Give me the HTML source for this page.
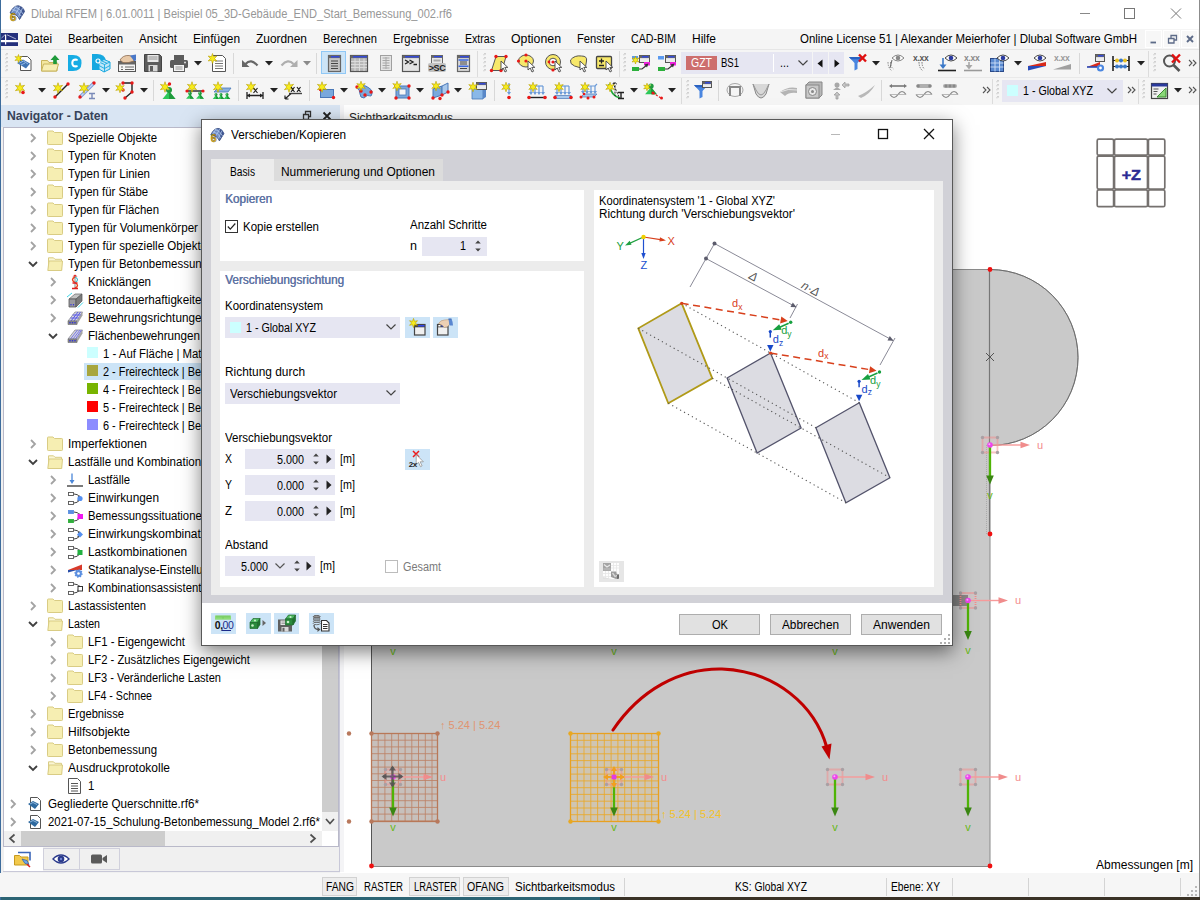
<!DOCTYPE html>
<html lang="de"><head><meta charset="utf-8"><title>Dlubal RFEM</title>
<style>
html,body{margin:0;padding:0}
body{width:1200px;height:900px;position:relative;overflow:hidden;background:#fff;font:12px "Liberation Sans",sans-serif;color:#000}
.b{position:absolute;display:block}
.t{position:absolute;white-space:nowrap;display:block;transform-origin:0 50%}
svg{overflow:visible}
</style></head>
<body>
<div class="b" style="left:0px;top:0px;width:1200px;height:29px;background:#fff;"></div>
<svg class="b" style="left:8px;top:3px;" width="20" height="20" viewBox="0 0 20 20">
<path d="M2 10 Q5 3 10 2.700 Q15 3.500 16.500 8.500 L11.500 16.500 Q9.500 11 2 10 Z" fill="#6f8cc4" stroke="#3a4c7c" stroke-width=".8"/>
<path d="M10 2.700 Q15 3.500 16.500 8.500 L11.500 16.500 Q13.500 9 10 2.700 Z" fill="#3f5590"/>
<path d="M4.500 6.500 Q10 7 13.500 13.500 M7 4 Q12 5 15 11 M4 9.500 L8 3.200 M7.500 11 L12 3.500 M10.500 13.500 L14.500 5" stroke="#b4ccf0" stroke-width=".8" fill="none"/>
<text x="5.300" y="17.800" font-size="11.500" font-weight="bold" text-anchor="middle" fill="#f2c420" stroke="#5e4e14" stroke-width=".5" font-family="Liberation Sans, sans-serif">6</text>
</svg>
<span class="t" style="left:31px;top:6px;line-height:16px;color:#979797;transform:scaleX(0.9240);">Dlubal RFEM | 6.01.0011 | Beispiel 05_3D-Gebäude_END_Start_Bemessung_002.rf6</span>
<svg class="b" style="left:1070px;top:0px;" width="130" height="28" viewBox="0 0 130 28">
<path d="M10 13.500 H20" stroke="#888" stroke-width="1"/>
<rect x="54.500" y="8.500" width="10" height="10" fill="none" stroke="#777" stroke-width="1"/>
<path d="M101 8.500 L111 18.500 M111 8.500 L101 18.500" stroke="#777" stroke-width="1"/>
</svg>
<div class="b" style="left:0px;top:29px;width:1200px;height:21px;background:#f5f5f5;border-bottom:1px solid #e6e6e6;box-sizing:border-box;"></div>
<svg class="b" style="left:1px;top:33px;" width="17" height="13" viewBox="0 0 17 13">
<rect width="17" height="13" fill="#24307c"/>
<rect x="0" y="7" width="17" height="2.200" fill="#fff"/>
<rect x="4" y="1.500" width="1.200" height="10" fill="#fff"/>
<path d="M0.500 5 L4 1.800 M6 1.800 L15 6" stroke="#dfe3f3" stroke-width=".7"/>
</svg>
<span class="t" style="left:25px;top:31px;line-height:16px;transform:scaleX(0.9637);">Datei</span>
<span class="t" style="left:68px;top:31px;line-height:16px;transform:scaleX(0.9475);">Bearbeiten</span>
<span class="t" style="left:139px;top:31px;line-height:16px;transform:scaleX(0.9655);">Ansicht</span>
<span class="t" style="left:193px;top:31px;line-height:16px;transform:scaleX(0.9921);">Einfügen</span>
<span class="t" style="left:256px;top:31px;line-height:16px;transform:scaleX(0.9927);">Zuordnen</span>
<span class="t" style="left:323px;top:31px;line-height:16px;transform:scaleX(0.9303);">Berechnen</span>
<span class="t" style="left:393px;top:31px;line-height:16px;transform:scaleX(0.9326);">Ergebnisse</span>
<span class="t" style="left:465px;top:31px;line-height:16px;transform:scaleX(0.8819);">Extras</span>
<span class="t" style="left:511px;top:31px;line-height:16px;transform:scaleX(1.0266);">Optionen</span>
<span class="t" style="left:577px;top:31px;line-height:16px;transform:scaleX(0.9339);">Fenster</span>
<span class="t" style="left:631px;top:31px;line-height:16px;transform:scaleX(0.8881);">CAD-BIM</span>
<span class="t" style="left:692px;top:31px;line-height:16px;transform:scaleX(0.9993);">Hilfe</span>
<span class="t" style="left:800px;top:31px;line-height:16px;transform:scaleX(0.9562);">Online License 51 | Alexander Meierhofer | Dlubal Software GmbH</span>
<div class="b" style="left:1145px;top:30px;width:17px;height:18px;background:#f7f7f7;border:1px solid #fff;box-sizing:border-box;"></div>
<div class="b" style="left:1163px;top:30px;width:17px;height:18px;background:#f7f7f7;border:1px solid #fff;box-sizing:border-box;"></div>
<div class="b" style="left:1181px;top:30px;width:17px;height:18px;background:#f7f7f7;border:1px solid #fff;box-sizing:border-box;"></div>
<svg class="b" style="left:1144px;top:30px;" width="56" height="18" viewBox="0 0 56 18">
<path d="M6.500 12.500 H12" stroke="#5d6b88" stroke-width="1.800"/>
<path d="M24.500 8.500 h5.500 v4.500 h-5.500 z M27 8 v-2.500 h5.500 v4.500 h-2.300" fill="none" stroke="#5d6b88" stroke-width="1.300"/>
<path d="M43 6 L49 12 M49 6 L43 12" stroke="#5d6b88" stroke-width="1.900"/>
</svg>
<div class="b" style="left:0px;top:50px;width:1200px;height:55px;background:#f5f5f5;"></div>
<div class="b" style="left:0px;top:77px;width:1200px;height:1px;background:#e9e9e9;"></div>
<div class="b" style="left:0px;top:0px;width:1px;height:900px;background:#3d6c9c;"></div>
<svg class="b" style="left:5px;top:53px;" width="4" height="21" viewBox="0 0 4 21"><rect x="1.200" y="0" width="1.600" height="1.600" fill="#c9c9c9"/><rect x=".2" y="1" width="1.400" height="1.400" fill="#d9d9d9"/><rect x="1.200" y="4" width="1.600" height="1.600" fill="#c9c9c9"/><rect x=".2" y="5" width="1.400" height="1.400" fill="#d9d9d9"/><rect x="1.200" y="8" width="1.600" height="1.600" fill="#c9c9c9"/><rect x=".2" y="9" width="1.400" height="1.400" fill="#d9d9d9"/><rect x="1.200" y="12" width="1.600" height="1.600" fill="#c9c9c9"/><rect x=".2" y="13" width="1.400" height="1.400" fill="#d9d9d9"/><rect x="1.200" y="16" width="1.600" height="1.600" fill="#c9c9c9"/><rect x=".2" y="17" width="1.400" height="1.400" fill="#d9d9d9"/></svg>
<svg class="b" style="left:14px;top:53px;" width="20" height="20" viewBox="0 0 20 20"><path d="M6.500 3.500 h7 l3.500 3.500 v10.500 h-10.500 z" fill="#fff" stroke="#555" stroke-width="1"/><path d="M3 10 l6 -3.500 l7 4 l-4 5 z" fill="#3f74b4"/><path d="M5.500 10 l4 -2 l4.500 3 M7 12 l4 -2" stroke="#a8c8ec" fill="none" stroke-width=".8"/><polygon points="4.5,1.5 5.3,4.0 8.0,3.5 6.2,5.5 8.0,7.5 5.3,7.0 4.5,9.5 3.7,7.0 1.0,7.5 2.8,5.5 1.0,3.5 3.7,4.0" fill="#f7ec1c" stroke="#b8a000" stroke-width=".6"/></svg>
<svg class="b" style="left:40px;top:53px;" width="20" height="20" viewBox="0 0 20 20"><path d="M1.500 7.500 h6 l1.500 2 h8 v8.500 h-15.500 z" fill="#f3e7a0" stroke="#c8b45c" stroke-width="1"/><path d="M1.500 18 l2 -7 h15 l-2 7 z" fill="#f7eeb4" stroke="#c8b45c" stroke-width="1"/><path d="M15 2 l4.500 5 h-2.700 v4 h-3.600 v-4 h-2.700 z" fill="#1e9a3a"/></svg>
<svg class="b" style="left:67px;top:53px;" width="20" height="20" viewBox="0 0 20 20"><path d="M1 2 h5 q8.500 0 8.500 8 q0 8 -8.500 8 h-5 z" fill="#16ace4"/><path d="M9.800 6.800 q-4.500 -.8 -4.500 3.200 q0 4 4.500 3.200" fill="none" stroke="#fff" stroke-width="2.100" stroke-linecap="round"/></svg>
<svg class="b" style="left:91px;top:53px;" width="20" height="20" viewBox="0 0 20 20"><path d="M1 1 h5 q8 0 9 7 l-7 9 h-7 z" fill="#16a8e0"/><path d="M8 9 l5 -2.500 l6 2.500 v7 l-6 3 l-5 -3 z" fill="#bfe6f7" stroke="#16a8e0" stroke-width="1"/><path d="M8 9 l5.500 2.500 l5.500 -2.500 M13.500 11.500 v7.500 M10.500 7.800 l5.500 2.500 M8 12.500 l5.500 3 l5.500 -3" fill="none" stroke="#16a8e0" stroke-width=".9"/><circle cx="7" cy="8" r="2" fill="none" stroke="#fff" stroke-width="1.200"/></svg>
<svg class="b" style="left:117px;top:53px;" width="20" height="20" viewBox="0 0 20 20"><rect x="1.500" y="8.500" width="17" height="10" fill="#f4f4f4" stroke="#555" stroke-width="1"/><rect x="1.500" y="8.500" width="17" height="3" fill="#666"/><path d="M4 14 h2 M8 14 h9 M4 16.500 h2 M8 16.500 h9" stroke="#666" stroke-width="1"/><path d="M3 7 q3 -5 9 -4.500 l5 1.500 v4 q-6 2.500 -11 1.500 z" fill="#e8c9a8" stroke="#8a6a50" stroke-width=".8"/><path d="M13 2.500 l6 -1 v6 l-2 .5 z" fill="#4a78c8"/></svg>
<svg class="b" style="left:143px;top:53px;" width="20" height="20" viewBox="0 0 20 20"><path d="M1.500 1.500 h15 l2 2 v15 h-17 z" fill="#5c5c5c" stroke="#444" stroke-width="1"/><rect x="4.500" y="2" width="11" height="7" fill="#e8e8e8"/><path d="M5.500 4 h9 M5.500 6 h9" stroke="#888" stroke-width=".9"/><rect x="5.500" y="12" width="9" height="6.500" fill="#d8d8d8"/><rect x="7" y="13" width="3" height="5" fill="#5c5c5c"/></svg>
<svg class="b" style="left:169px;top:53px;" width="20" height="20" viewBox="0 0 20 20"><rect x="5" y="2" width="10" height="5" fill="#5c5c5c"/><rect x="1" y="7" width="18" height="8" rx="1.500" fill="#5c5c5c"/><rect x="4.500" y="11.500" width="11" height="7" fill="#f4f4f4" stroke="#5c5c5c" stroke-width="1"/><path d="M6.500 14 h7 M6.500 16 h7" stroke="#888" stroke-width=".9"/><circle cx="16" cy="9.500" r="1" fill="#ddd"/></svg>
<svg class="b" style="left:194px;top:61px;" width="8" height="5" viewBox="0 0 8 5"><path d="M0 0 H8 L4 4.500 Z" fill="#222"/></svg>
<svg class="b" style="left:207px;top:53px;" width="20" height="20" viewBox="0 0 20 20"><path d="M5.500 2.500 h10 l3 3 v13 h-13 z" fill="#fff" stroke="#555" stroke-width="1"/><path d="M8 8 h8 M8 10.500 h8 M8 13 h8 M8 15.500 h8" stroke="#777" stroke-width="1"/><polygon points="5.5,0.5 6.5,3.7 9.8,3.0 7.6,5.5 9.8,8.0 6.6,7.3 5.5,10.5 4.5,7.3 1.2,8.0 3.4,5.5 1.2,3.0 4.4,3.7" fill="#f7ec1c" stroke="#b8a000" stroke-width=".6"/></svg>
<div class="b" style="left:233px;top:53px;width:1px;height:21px;background:#d8d8d8;"></div>
<svg class="b" style="left:241px;top:53px;" width="20" height="20" viewBox="0 0 20 20"><path d="M4.500 11 q5.500 -6 12 1.500" fill="none" stroke="#666" stroke-width="2.200"/><path d="M1 7 v7 h7.500 z" fill="#666"/></svg>
<svg class="b" style="left:265px;top:61px;" width="8" height="5" viewBox="0 0 8 5"><path d="M0 0 H8 L4 4.500 Z" fill="#222"/></svg>
<svg class="b" style="left:279px;top:53px;" width="20" height="20" viewBox="0 0 20 20"><path d="M2.500 12.500 q6.500 -7.500 12 -1.500" fill="none" stroke="#aeaeae" stroke-width="2.200"/><path d="M18.500 7 v7 h-7.500 z" fill="#aeaeae"/></svg>
<svg class="b" style="left:303px;top:61px;" width="8" height="5" viewBox="0 0 8 5"><path d="M0 0 H8 L4 4.500 Z" fill="#8a8a8a"/></svg>
<div class="b" style="left:316px;top:53px;width:1px;height:21px;background:#d8d8d8;"></div>
<div class="b" style="left:321px;top:51px;width:25px;height:23px;background:#cce4f7;border:1px solid #90c8f6;box-sizing:border-box;"></div>
<svg class="b" style="left:324px;top:53px;" width="20" height="20" viewBox="0 0 20 20"><rect x="4.5" y="2.500" width="12" height="16" fill="#c4c4c4" stroke="#666" stroke-width="1.200"/><rect x="4.5" y="2.500" width="12" height="2.600" fill="#666"/><rect x="7" y="3.100" width="8.500" height="1.400" fill="#3048e0"/><path d="M7 8 h7 M7 10.500 h7 M7 13 h7 M7 15.500 h7" stroke="#444" stroke-width="1.200"/></svg>
<svg class="b" style="left:349px;top:53px;" width="20" height="20" viewBox="0 0 20 20"><rect x="1.500" y="2.500" width="17" height="16" fill="#b8b8b8" stroke="#555" stroke-width="1.200"/><rect x="1.500" y="2.500" width="17" height="2.600" fill="#666"/><rect x="4" y="3.100" width="14" height="1.400" fill="#3048e0"/><path d="M2 8.500 h16 M2 11.500 h16 M2 14.500 h16 M6 5.500 v12.500 M10.500 5.500 v12.500 M15 5.500 v12.500" stroke="#dedede" stroke-width=".9"/></svg>
<svg class="b" style="left:376px;top:53px;" width="20" height="20" viewBox="0 0 20 20"><rect x="4.500" y="2.500" width="11" height="15" fill="#e4e4e4" stroke="#a0a0a0" stroke-width="1"/><path d="M6.500 5 h7 M6.500 7.500 h7 M6.500 10 h7 M6.500 12.500 h7 M6.500 15 h7 M10 4 v12" stroke="#a8a8a8" stroke-width="1"/></svg>
<svg class="b" style="left:401px;top:53px;" width="20" height="20" viewBox="0 0 20 20"><rect x="1.500" y="2.500" width="17" height="16" fill="#e4e4e4" stroke="#555" stroke-width="1.200"/><rect x="1.500" y="2.500" width="17" height="2.600" fill="#666"/><rect x="4" y="3.100" width="14" height="1.400" fill="#3048e0"/><path d="M4 7 l3.500 2 l-3.500 2 M8.500 7 l3.500 2 l-3.500 2 M12.500 11.500 h3.500" fill="none" stroke="#222" stroke-width="1.400"/></svg>
<svg class="b" style="left:427px;top:53px;" width="20" height="20" viewBox="0 0 20 20"><rect x="4.500" y="2.500" width="11" height="8" fill="#e8e8e8" stroke="#666" stroke-width="1"/><rect x="4.500" y="2.500" width="11" height="2.400" fill="#666"/><rect x="7" y="3" width="8" height="1.300" fill="#3048e0"/><rect x="6.500" y="6.500" width="7" height="2" fill="#aaa"/><rect x="1" y="10" width="18" height="9" rx="2" fill="#c2c2c2"/><text x="10" y="17.800" font-size="9" font-weight="bold" text-anchor="middle" fill="#222" font-family="Liberation Sans, sans-serif" letter-spacing="-.4">&gt;SC</text></svg>
<svg class="b" style="left:453px;top:53px;" width="20" height="20" viewBox="0 0 20 20"><rect x="4.500" y="2.500" width="12" height="16" fill="#d8d8d8" stroke="#666" stroke-width="1.200"/><rect x="4.500" y="2.500" width="12" height="2.600" fill="#666"/><rect x="7" y="3.100" width="9" height="1.400" fill="#3048e0"/><path d="M7 9 h7 M7 11 h7 M7 15.500 h7" stroke="#444" stroke-width="1.200"/><path d="M5.500 7 h10 M5.500 13.200 h10" stroke="#3a66e0" stroke-width="1.400"/></svg>
<div class="b" style="left:477px;top:51px;width:1px;height:26px;background:#dcdcdc;"></div>
<svg class="b" style="left:483px;top:53px;" width="4" height="21" viewBox="0 0 4 21"><rect x="1.200" y="0" width="1.600" height="1.600" fill="#c9c9c9"/><rect x=".2" y="1" width="1.400" height="1.400" fill="#d9d9d9"/><rect x="1.200" y="4" width="1.600" height="1.600" fill="#c9c9c9"/><rect x=".2" y="5" width="1.400" height="1.400" fill="#d9d9d9"/><rect x="1.200" y="8" width="1.600" height="1.600" fill="#c9c9c9"/><rect x=".2" y="9" width="1.400" height="1.400" fill="#d9d9d9"/><rect x="1.200" y="12" width="1.600" height="1.600" fill="#c9c9c9"/><rect x=".2" y="13" width="1.400" height="1.400" fill="#d9d9d9"/><rect x="1.200" y="16" width="1.600" height="1.600" fill="#c9c9c9"/><rect x=".2" y="17" width="1.400" height="1.400" fill="#d9d9d9"/></svg>
<svg class="b" style="left:490px;top:53px;" width="20" height="20" viewBox="0 0 20 20"><path d="M6 3.500 h10 l-4 14 h-10.500 z" fill="#f7e86a" stroke="#555" stroke-width="1"/><circle cx="6" cy="3.5" r="1.7" fill="#e81818"/><circle cx="16" cy="3.5" r="1.7" fill="#e81818"/><circle cx="1.5" cy="17.5" r="1.7" fill="#e81818"/><circle cx="11" cy="17.5" r="1.7" fill="#e81818"/><path d="M11 8 v9 l2.200 -2 l1.800 4 l1.600 -.8 l-1.800 -3.800 h3 z" fill="#fff" stroke="#444" stroke-width=".9"/></svg>
<svg class="b" style="left:517px;top:53px;" width="20" height="20" viewBox="0 0 20 20"><ellipse cx="9" cy="8" rx="7.500" ry="6" fill="#f7e86a" stroke="#555" stroke-width="1"/><circle cx="9" cy="2" r="1.6" fill="#e81818"/><circle cx="1.5" cy="8" r="1.6" fill="#e81818"/><circle cx="9" cy="8" r="1.6" fill="#e81818"/><path d="M11 8 v9 l2.200 -2 l1.800 4 l1.600 -.8 l-1.800 -3.800 h3 z" fill="#fff" stroke="#444" stroke-width=".9"/></svg>
<svg class="b" style="left:544px;top:53px;" width="20" height="20" viewBox="0 0 20 20"><circle cx="9" cy="9" r="7.500" fill="#f7e86a" stroke="#555" stroke-width="1"/><circle cx="9" cy="9" r="3.800" fill="#fff" stroke="#555" stroke-width="1"/><circle cx="9" cy="9" r="1.6" fill="#e81818"/><circle cx="5" cy="9" r="1.4" fill="#e81818"/><circle cx="9" cy="17" r="1.6" fill="#e81818"/><path d="M11 8 v9 l2.200 -2 l1.800 4 l1.600 -.8 l-1.800 -3.800 h3 z" fill="#fff" stroke="#444" stroke-width=".9"/></svg>
<svg class="b" style="left:569px;top:53px;" width="20" height="20" viewBox="0 0 20 20"><path d="M1.500 7 q4 -5 11 -4 q6 0 5 5 l-1 6 q-5 2 -11 -1 q-5 -2 -4 -6 z" fill="#f7e86a" stroke="#555" stroke-width="1"/><path d="M11 8 v9 l2.200 -2 l1.800 4 l1.600 -.8 l-1.800 -3.800 h3 z" fill="#fff" stroke="#444" stroke-width=".9"/></svg>
<svg class="b" style="left:595px;top:53px;" width="20" height="20" viewBox="0 0 20 20"><rect x="1.500" y="3.500" width="15" height="12" rx="1" fill="#f7e86a" stroke="#444" stroke-width="1.300"/><path d="M4 8 h5 M6.500 5.500 v5 M4 12.500 h5" stroke="#222" stroke-width="1.300"/><path d="M11 8 v9 l2.200 -2 l1.800 4 l1.600 -.8 l-1.800 -3.800 h3 z" fill="#fff" stroke="#444" stroke-width=".9"/></svg>
<div class="b" style="left:619px;top:51px;width:1px;height:26px;background:#dcdcdc;"></div>
<svg class="b" style="left:623px;top:53px;" width="4" height="21" viewBox="0 0 4 21"><rect x="1.200" y="0" width="1.600" height="1.600" fill="#c9c9c9"/><rect x=".2" y="1" width="1.400" height="1.400" fill="#d9d9d9"/><rect x="1.200" y="4" width="1.600" height="1.600" fill="#c9c9c9"/><rect x=".2" y="5" width="1.400" height="1.400" fill="#d9d9d9"/><rect x="1.200" y="8" width="1.600" height="1.600" fill="#c9c9c9"/><rect x=".2" y="9" width="1.400" height="1.400" fill="#d9d9d9"/><rect x="1.200" y="12" width="1.600" height="1.600" fill="#c9c9c9"/><rect x=".2" y="13" width="1.400" height="1.400" fill="#d9d9d9"/><rect x="1.200" y="16" width="1.600" height="1.600" fill="#c9c9c9"/><rect x=".2" y="17" width="1.400" height="1.400" fill="#d9d9d9"/></svg>
<svg class="b" style="left:631px;top:53px;" width="20" height="20" viewBox="0 0 20 20"><rect x="1" y="3" width="6" height="3.500" fill="#5a9af0"/><rect x="1" y="14" width="7" height="4" fill="#2cb03c"/><rect x="8.5" y="2.5" width="10" height="7" fill="#ececec" stroke="#555" stroke-width="1"/><rect x="8.5" y="2.5" width="10" height="2.600" fill="#666"/><rect x="11.0" y="3.1" width="6.5" height="1.400" fill="#3048e0"/><rect x="13" y="9" width="6" height="3.500" fill="#f020e0"/><path d="M8 16 h3 l5 -4" fill="none" stroke="#333" stroke-width="1.200"/><path d="M17.500 10.500 l-4 1 l2.500 3 z" fill="#333"/><polygon points="4.5,3.0 5.3,5.5 8.0,5.0 6.2,7.0 8.0,9.0 5.3,8.5 4.5,11.0 3.7,8.5 1.0,9.0 2.8,7.0 1.0,5.0 3.7,5.5" fill="#f7ec1c" stroke="#b8a000" stroke-width=".6"/></svg>
<svg class="b" style="left:657px;top:53px;" width="20" height="20" viewBox="0 0 20 20"><rect x="1" y="3" width="6" height="3.500" fill="#5a9af0"/><rect x="1" y="14" width="7" height="4" fill="#2cb03c"/><rect x="8.5" y="2.5" width="10" height="7" fill="#ececec" stroke="#555" stroke-width="1"/><rect x="8.5" y="2.5" width="10" height="2.600" fill="#666"/><rect x="11.0" y="3.1" width="6.5" height="1.400" fill="#3048e0"/><rect x="13" y="9" width="6" height="3.500" fill="#f020e0"/><path d="M8 16 h3 l5 -4" fill="none" stroke="#333" stroke-width="1.200"/><path d="M17.500 10.500 l-4 1 l2.500 3 z" fill="#333"/></svg>
<div class="b" style="left:681px;top:52px;width:131px;height:22px;background:#e6e6f2;"></div>
<div class="b" style="left:686px;top:56px;width:31px;height:14px;background:#cd6e6e;"></div>
<span class="t" style="left:691px;top:55px;line-height:16px;color:#fff;transform:scaleX(0.8750);">GZT</span>
<span class="t" style="left:721px;top:55px;line-height:16px;transform:scaleX(0.7934);">BS1</span>
<div class="b" style="left:773px;top:54px;width:1px;height:18px;background:#fff;"></div>
<span class="t" style="left:780px;top:55px;line-height:16px;transform:scaleX(0.8986);">...</span>
<svg class="b" style="left:797px;top:59px;" width="12" height="8" viewBox="0 0 12 8"><path d="M1.500 1.500 L6 6 L10.500 1.500" fill="none" stroke="#444" stroke-width="1.200"/></svg>
<div class="b" style="left:813px;top:52px;width:15px;height:22px;background:#e6e6f2;"></div>
<div class="b" style="left:829px;top:52px;width:15px;height:22px;background:#e6e6f2;"></div>
<svg class="b" style="left:817px;top:59px;" width="6" height="9" viewBox="0 0 6 9"><path d="M5.500 .5 V8.500 L.5 4.500 Z" fill="#111"/></svg>
<svg class="b" style="left:834px;top:59px;" width="6" height="9" viewBox="0 0 6 9"><path d="M.5 .5 V8.500 L5.500 4.500 Z" fill="#111"/></svg>
<svg class="b" style="left:848px;top:53px;" width="20" height="20" viewBox="0 0 20 20"><path d="M1 4 h14 l-5.500 6 v6 l-3 1.500 v-7.500 z" fill="#4a86e0"/><path d="M1 4 h14 l-2 2.200 h-10 z" fill="#2a62c0"/><path d="M11 1.500 l7 7 m0 -7 l-7 7" stroke="#e01010" stroke-width="2.400"/></svg>
<svg class="b" style="left:872px;top:61px;" width="8" height="5" viewBox="0 0 8 5"><path d="M0 0 H8 L4 4.500 Z" fill="#222"/></svg>
<svg class="b" style="left:886px;top:53px;" width="20" height="20" viewBox="0 0 20 20"><path d="M2 9 q0 6 4 9 M4.500 9 q0 5 3 7" fill="none" stroke="#888" stroke-width="1" stroke-dasharray="1.500 1"/><path d="M6 7 l-2 8" stroke="#666" stroke-width="1"/><path d="M6 5 q6 -6 12 0 q-6 6 -12 0 z" fill="#fff" stroke="#777" stroke-width=".9"/><circle cx="12" cy="5" r="2.300" fill="#888"/></svg>
<svg class="b" style="left:912px;top:53px;" width="20" height="20" viewBox="0 0 20 20"><text x="1" y="8" font-size="8.500" font-weight="bold" fill="#555" font-family="Liberation Sans, sans-serif" letter-spacing="-.3">x.xx</text><path d="M7 9 q0 6 4 9 M10 9 q0 5 2.500 7" fill="none" stroke="#777" stroke-width="1" stroke-dasharray="1.500 1"/></svg>
<svg class="b" style="left:937px;top:53px;" width="20" height="20" viewBox="0 0 20 20"><path d="M6 5 v9" stroke="#3a78c8" stroke-width="1.600"/><path d="M2.500 11.500 l3.500 4.500 l3.500 -4.500 z" fill="#3a78c8"/><path d="M1 17.500 h18" stroke="#222" stroke-width="1.600"/><path d="M8 5 q6 -6 12 0 q-6 6 -12 0 z" fill="#fff" stroke="#333" stroke-width=".9"/><circle cx="14" cy="5" r="2.300" fill="#2a3aa0"/></svg>
<svg class="b" style="left:963px;top:53px;" width="20" height="20" viewBox="0 0 20 20"><text x="1" y="8" font-size="8.500" font-weight="bold" fill="#888" font-family="Liberation Sans, sans-serif" letter-spacing="-.3">x.xx</text><path d="M6 9 v6" stroke="#a8a8a8" stroke-width="1.600"/><path d="M2.500 12 l3.500 4.500 l3.500 -4.500 z" fill="#a8a8a8"/><path d="M1 17.500 h18" stroke="#999" stroke-width="1.600"/></svg>
<svg class="b" style="left:989px;top:53px;" width="20" height="20" viewBox="0 0 20 20"><rect x="1.500" y="5.500" width="13" height="13" fill="#5a8ad0" stroke="#2a4a8a" stroke-width="1"/><path d="M1.500 10 h13 M1.500 14 h13 M6 5.500 v13 M10.500 5.500 v13" stroke="#cfe0f8" stroke-width=".9"/><path d="M8 5 q6 -6 12 0 q-6 6 -12 0 z" fill="#fff" stroke="#333" stroke-width=".9"/><circle cx="14" cy="5" r="2.300" fill="#2a3aa0"/></svg>
<svg class="b" style="left:1014px;top:61px;" width="8" height="5" viewBox="0 0 8 5"><path d="M0 0 H8 L4 4.500 Z" fill="#222"/></svg>
<svg class="b" style="left:1027px;top:53px;" width="20" height="20" viewBox="0 0 20 20"><path d="M1 13 L19 9 V13 Z" fill="#d82a1a"/><path d="M1 13 H19 L1 17.500 Z" fill="#2a4ab8"/><path d="M7 5 q6 -6 12 0 q-6 6 -12 0 z" fill="#fff" stroke="#333" stroke-width=".9"/><circle cx="13" cy="5" r="2.300" fill="#2a3aa0"/></svg>
<svg class="b" style="left:1052px;top:53px;" width="20" height="20" viewBox="0 0 20 20"><text x="2" y="8" font-size="8.500" font-weight="bold" fill="#999" font-family="Liberation Sans, sans-serif" letter-spacing="-.3">x.xx</text><path d="M1 16.500 L19 11 V16.500 Z" fill="#a0a0a0"/></svg>
<div class="b" style="left:1079px;top:53px;width:1px;height:21px;background:#d8d8d8;"></div>
<svg class="b" style="left:1086px;top:53px;" width="20" height="20" viewBox="0 0 20 20"><path d="M1 14 L14 9 V14 Z" fill="#d82a1a"/><path d="M1 14 H12" stroke="#2a4ab8" stroke-width="1.600"/><rect x="9.5" y="1.5" width="9" height="7" fill="#ececec" stroke="#555" stroke-width="1"/><rect x="9.5" y="1.5" width="9" height="2.600" fill="#666"/><rect x="12.0" y="2.1" width="5.5" height="1.400" fill="#3048e0"/><circle cx="14.500" cy="15" r="3.600" fill="#4a86e0"/><circle cx="14.500" cy="15" r="1.400" fill="#fff"/></svg>
<svg class="b" style="left:1111px;top:53px;" width="20" height="20" viewBox="0 0 20 20"><path d="M2 3 v15 M18 3 v15" stroke="#222" stroke-width="1.600"/><path d="M2 7.500 h16 M2 13.500 h16" stroke="#222" stroke-width="1"/><circle cx="6" cy="7.500" r="2" fill="#e8c020"/><circle cx="10" cy="7.500" r="2" fill="#3a78c8"/><circle cx="14" cy="7.500" r="2" fill="#e8c020"/><circle cx="6" cy="13.500" r="2" fill="#3a78c8"/><circle cx="10" cy="13.500" r="2" fill="#3a78c8"/><circle cx="14" cy="13.500" r="2" fill="#3a78c8"/></svg>
<svg class="b" style="left:1137px;top:61px;" width="8" height="5" viewBox="0 0 8 5"><path d="M0 0 H8 L4 4.500 Z" fill="#222"/></svg>
<div class="b" style="left:1148px;top:51px;width:1px;height:26px;background:#dcdcdc;"></div>
<svg class="b" style="left:1153px;top:53px;" width="4" height="21" viewBox="0 0 4 21"><rect x="1.200" y="0" width="1.600" height="1.600" fill="#c9c9c9"/><rect x=".2" y="1" width="1.400" height="1.400" fill="#d9d9d9"/><rect x="1.200" y="4" width="1.600" height="1.600" fill="#c9c9c9"/><rect x=".2" y="5" width="1.400" height="1.400" fill="#d9d9d9"/><rect x="1.200" y="8" width="1.600" height="1.600" fill="#c9c9c9"/><rect x=".2" y="9" width="1.400" height="1.400" fill="#d9d9d9"/><rect x="1.200" y="12" width="1.600" height="1.600" fill="#c9c9c9"/><rect x=".2" y="13" width="1.400" height="1.400" fill="#d9d9d9"/><rect x="1.200" y="16" width="1.600" height="1.600" fill="#c9c9c9"/><rect x=".2" y="17" width="1.400" height="1.400" fill="#d9d9d9"/></svg>
<svg class="b" style="left:1162px;top:53px;" width="20" height="20" viewBox="0 0 20 20"><circle cx="7.500" cy="8" r="5.500" fill="none" stroke="#555" stroke-width="2"/><path d="M11.500 12 l6 6" stroke="#555" stroke-width="2.600"/><path d="M10 1.500 l8 8 m0 -8 l-8 8" stroke="#e01010" stroke-width="2.400"/></svg>
<svg class="b" style="left:1188px;top:59px;" width="9" height="8" viewBox="0 0 9 8"><path d="M1 1 L4 4 L1 7 M5 1 L8 4 L5 7" fill="none" stroke="#555" stroke-width="1.100"/></svg>
<svg class="b" style="left:5px;top:80px;" width="4" height="21" viewBox="0 0 4 21"><rect x="1.200" y="0" width="1.600" height="1.600" fill="#c9c9c9"/><rect x=".2" y="1" width="1.400" height="1.400" fill="#d9d9d9"/><rect x="1.200" y="4" width="1.600" height="1.600" fill="#c9c9c9"/><rect x=".2" y="5" width="1.400" height="1.400" fill="#d9d9d9"/><rect x="1.200" y="8" width="1.600" height="1.600" fill="#c9c9c9"/><rect x=".2" y="9" width="1.400" height="1.400" fill="#d9d9d9"/><rect x="1.200" y="12" width="1.600" height="1.600" fill="#c9c9c9"/><rect x=".2" y="13" width="1.400" height="1.400" fill="#d9d9d9"/><rect x="1.200" y="16" width="1.600" height="1.600" fill="#c9c9c9"/><rect x=".2" y="17" width="1.400" height="1.400" fill="#d9d9d9"/></svg>
<svg class="b" style="left:12px;top:80px;" width="20" height="20" viewBox="0 0 20 20"><polygon points="8.0,2.7 9.1,6.1 12.6,5.3 10.2,8.0 12.6,10.6 9.1,9.9 8.0,13.3 6.9,9.9 3.4,10.7 5.8,8.0 3.4,5.4 6.9,6.1" fill="#f7ec1c" stroke="#b8a000" stroke-width=".6"/><circle cx="11" cy="12.5" r="1.8" fill="#e81818"/></svg>
<svg class="b" style="left:38px;top:88px;" width="8" height="5" viewBox="0 0 8 5"><path d="M0 0 H8 L4 4.500 Z" fill="#222"/></svg>
<svg class="b" style="left:51px;top:80px;" width="20" height="20" viewBox="0 0 20 20"><path d="M4 17 L17 4" stroke="#222" stroke-width="1.400"/><circle cx="4" cy="17" r="1.7" fill="#e81818"/><circle cx="17" cy="4" r="1.7" fill="#e81818"/><polygon points="7.0,2.7 8.1,6.1 11.6,5.3 9.2,8.0 11.6,10.6 8.1,9.9 7.0,13.3 5.9,9.9 2.4,10.7 4.8,8.0 2.4,5.4 5.9,6.1" fill="#f7ec1c" stroke="#b8a000" stroke-width=".6"/></svg>
<svg class="b" style="left:77px;top:80px;" width="20" height="20" viewBox="0 0 20 20"><path d="M3 17 L17 3" stroke="#7a9ad8" stroke-width="3.400"/><path d="M3 17 L17 3" stroke="#c8d8f4" stroke-width="1.400"/><circle cx="3" cy="17" r="1.7" fill="#e81818"/><circle cx="17" cy="3" r="1.7" fill="#e81818"/><polygon points="7.0,2.7 8.1,6.1 11.6,5.3 9.2,8.0 11.6,10.6 8.1,9.9 7.0,13.3 5.9,9.9 2.4,10.7 4.8,8.0 2.4,5.4 5.9,6.1" fill="#f7ec1c" stroke="#b8a000" stroke-width=".6"/><path d="M12 13.500 h6 M12 18.500 h6 M15 13.500 v5" stroke="#7a8ab8" stroke-width="1.400"/></svg>
<svg class="b" style="left:102px;top:88px;" width="8" height="5" viewBox="0 0 8 5"><path d="M0 0 H8 L4 4.500 Z" fill="#222"/></svg>
<svg class="b" style="left:115px;top:80px;" width="20" height="20" viewBox="0 0 20 20"><path d="M8 3 H17 V12 L10 18" fill="none" stroke="#222" stroke-width="1.400"/><circle cx="8" cy="3" r="1.7" fill="#e81818"/><circle cx="17" cy="3" r="1.7" fill="#e81818"/><circle cx="17" cy="12" r="1.7" fill="#e81818"/><circle cx="10" cy="18" r="1.7" fill="#e81818"/><circle cx="8" cy="10" r="1.7" fill="#e81818"/><polygon points="5.0,3.2 6.0,6.3 9.2,5.6 7.0,8.0 9.2,10.4 6.0,9.7 5.0,12.8 4.0,9.7 0.8,10.4 3.0,8.0 0.8,5.6 4.0,6.3" fill="#f7ec1c" stroke="#b8a000" stroke-width=".6"/></svg>
<svg class="b" style="left:140px;top:88px;" width="8" height="5" viewBox="0 0 8 5"><path d="M0 0 H8 L4 4.500 Z" fill="#222"/></svg>
<div class="b" style="left:153px;top:80px;width:1px;height:21px;background:#d8d8d8;"></div>
<svg class="b" style="left:159px;top:80px;" width="20" height="20" viewBox="0 0 20 20"><path d="M10 11 l6.5 8 h-13 z" fill="#2cc858"/><path d="M10 11 l6.5 8 h-6.5 z" fill="#1f9a3c"/><circle cx="10" cy="10" r="3" fill="#1f9a3c"/><circle cx="9" cy="9" r="1.2" fill="#7ae08c"/><polygon points="6.0,1.7 7.1,5.1 10.6,4.3 8.2,7.0 10.6,9.6 7.1,8.9 6.0,12.3 4.9,8.9 1.4,9.7 3.8,7.0 1.4,4.4 4.9,5.1" fill="#f7ec1c" stroke="#b8a000" stroke-width=".6"/><circle cx="10.5" cy="4" r="1.7" fill="#e81818"/></svg>
<svg class="b" style="left:185px;top:80px;" width="20" height="20" viewBox="0 0 20 20"><path d="M2 11 h17" stroke="#222" stroke-width="1.400"/><path d="M5 14 l3.9 4.8 h-7.8 z" fill="#2cc858"/><path d="M5 14 l3.9 4.8 h-3.9 z" fill="#1f9a3c"/><circle cx="5" cy="13.4" r="1.7999999999999998" fill="#1f9a3c"/><circle cx="4.4" cy="12.8" r="0.72" fill="#7ae08c"/><path d="M15 14 l3.9 4.8 h-7.8 z" fill="#2cc858"/><path d="M15 14 l3.9 4.8 h-3.9 z" fill="#1f9a3c"/><circle cx="15" cy="13.4" r="1.7999999999999998" fill="#1f9a3c"/><circle cx="14.4" cy="12.8" r="0.72" fill="#7ae08c"/><circle cx="2" cy="11" r="1.6" fill="#e81818"/><circle cx="18" cy="11" r="1.6" fill="#e81818"/><polygon points="7.0,1.7 8.1,5.1 11.6,4.3 9.2,7.0 11.6,9.6 8.1,8.9 7.0,12.3 5.9,8.9 2.4,9.7 4.8,7.0 2.4,4.4 5.9,5.1" fill="#f7ec1c" stroke="#b8a000" stroke-width=".6"/></svg>
<svg class="b" style="left:212px;top:80px;" width="20" height="20" viewBox="0 0 20 20"><path d="M2 12 l4 -4 h13 l-3 4 z" fill="#8ab0e0" stroke="#4a78b8" stroke-width=".8"/><path d="M4 15 l3.25 4.0 h-6.5 z" fill="#2cc858"/><path d="M4 15 l3.25 4.0 h-3.25 z" fill="#1f9a3c"/><circle cx="4" cy="14.5" r="1.5" fill="#1f9a3c"/><circle cx="3.5" cy="14.0" r="0.6" fill="#7ae08c"/><path d="M9 15 l3.25 4.0 h-6.5 z" fill="#2cc858"/><path d="M9 15 l3.25 4.0 h-3.25 z" fill="#1f9a3c"/><circle cx="9" cy="14.5" r="1.5" fill="#1f9a3c"/><circle cx="8.5" cy="14.0" r="0.6" fill="#7ae08c"/><path d="M15 15 l3.25 4.0 h-6.5 z" fill="#2cc858"/><path d="M15 15 l3.25 4.0 h-3.25 z" fill="#1f9a3c"/><circle cx="15" cy="14.5" r="1.5" fill="#1f9a3c"/><circle cx="14.5" cy="14.0" r="0.6" fill="#7ae08c"/><polygon points="6.0,1.7 7.1,5.1 10.6,4.3 8.2,7.0 10.6,9.6 7.1,8.9 6.0,12.3 4.9,8.9 1.4,9.7 3.8,7.0 1.4,4.4 4.9,5.1" fill="#f7ec1c" stroke="#b8a000" stroke-width=".6"/></svg>
<div class="b" style="left:238px;top:80px;width:1px;height:21px;background:#d8d8d8;"></div>
<svg class="b" style="left:245px;top:80px;" width="20" height="20" viewBox="0 0 20 20"><polygon points="6.0,1.7 7.1,5.1 10.6,4.3 8.2,7.0 10.6,9.6 7.1,8.9 6.0,12.3 4.9,8.9 1.4,9.7 3.8,7.0 1.4,4.4 4.9,5.1" fill="#f7ec1c" stroke="#b8a000" stroke-width=".6"/><path d="M2 12 v7 M18 12 v7 M2 15.500 h16" stroke="#222" stroke-width="1.300"/><path d="M2 15.500 l3 -2 v4 z M18 15.500 l-3 -2 v4 z" fill="#222"/><path d="M8.500 8 l4 5 m0 -5 l-4 5" stroke="#222" stroke-width="1.200"/></svg>
<svg class="b" style="left:270px;top:88px;" width="8" height="5" viewBox="0 0 8 5"><path d="M0 0 H8 L4 4.500 Z" fill="#222"/></svg>
<svg class="b" style="left:283px;top:80px;" width="20" height="20" viewBox="0 0 20 20"><polygon points="6.0,1.7 7.1,5.1 10.6,4.3 8.2,7.0 10.6,9.6 7.1,8.9 6.0,12.3 4.9,8.9 1.4,9.7 3.8,7.0 1.4,4.4 4.9,5.1" fill="#f7ec1c" stroke="#b8a000" stroke-width=".6"/><path d="M6 13.500 h13" stroke="#444" stroke-width="1.400"/><path d="M8 13.500 L2 19 m0 0 v-3.500 m0 3.500 h3.500" stroke="#222" stroke-width="1.200" fill="none"/><path d="M8 7 l3.500 5 m0 -5 l-3.500 5 M14 7 l3.500 5 m0 -5 l-3.500 5" stroke="#222" stroke-width="1.200"/></svg>
<div class="b" style="left:309px;top:80px;width:1px;height:21px;background:#d8d8d8;"></div>
<svg class="b" style="left:316px;top:80px;" width="20" height="20" viewBox="0 0 20 20"><rect x="4.500" y="9.500" width="13" height="8" fill="#7aa8dc" stroke="#4a78b8" stroke-width="1"/><circle cx="4.5" cy="9.5" r="1.7" fill="#e81818"/><circle cx="17.5" cy="17.5" r="1.7" fill="#e81818"/><polygon points="6.0,1.7 7.1,5.1 10.6,4.3 8.2,7.0 10.6,9.6 7.1,8.9 6.0,12.3 4.9,8.9 1.4,9.7 3.8,7.0 1.4,4.4 4.9,5.1" fill="#f7ec1c" stroke="#b8a000" stroke-width=".6"/></svg>
<svg class="b" style="left:340px;top:88px;" width="8" height="5" viewBox="0 0 8 5"><path d="M0 0 H8 L4 4.500 Z" fill="#222"/></svg>
<svg class="b" style="left:354px;top:80px;" width="20" height="20" viewBox="0 0 20 20"><path d="M3 8 q6 -5 12 0 q5 3 2 8 q-4 -2 -7 2 q-4 0 -4 -4 q0 -4 -3 -6 z" fill="#7aa8dc" stroke="#4a78b8" stroke-width="1"/><circle cx="3" cy="7" r="1.7" fill="#e81818"/><circle cx="7" cy="11" r="1.7" fill="#e81818"/><circle cx="11" cy="15" r="1.7" fill="#e81818"/><circle cx="17" cy="12" r="1.7" fill="#e81818"/><polygon points="7.0,1.2 8.0,4.3 11.2,3.6 9.0,6.0 11.2,8.4 8.0,7.7 7.0,10.8 6.0,7.7 2.8,8.4 5.0,6.0 2.8,3.6 6.0,4.3" fill="#f7ec1c" stroke="#b8a000" stroke-width=".6"/></svg>
<svg class="b" style="left:378px;top:88px;" width="8" height="5" viewBox="0 0 8 5"><path d="M0 0 H8 L4 4.500 Z" fill="#222"/></svg>
<svg class="b" style="left:392px;top:80px;" width="20" height="20" viewBox="0 0 20 20"><rect x="4" y="6" width="13" height="12" fill="#7aa8dc" stroke="#4a78b8" stroke-width="1"/><rect x="7" y="9" width="7" height="6" fill="#f5f5f5" stroke="#4a78b8" stroke-width=".8"/><circle cx="4" cy="6" r="1.7" fill="#e81818"/><circle cx="17" cy="6" r="1.7" fill="#e81818"/><circle cx="4" cy="18" r="1.7" fill="#e81818"/><circle cx="17" cy="18" r="1.7" fill="#e81818"/><polygon points="5.0,1.2 6.0,4.3 9.2,3.6 7.0,6.0 9.2,8.4 6.0,7.7 5.0,10.8 4.0,7.7 0.8,8.4 3.0,6.0 0.8,3.6 4.0,4.3" fill="#f7ec1c" stroke="#b8a000" stroke-width=".6"/></svg>
<svg class="b" style="left:416px;top:88px;" width="8" height="5" viewBox="0 0 8 5"><path d="M0 0 H8 L4 4.500 Z" fill="#222"/></svg>
<svg class="b" style="left:430px;top:80px;" width="20" height="20" viewBox="0 0 20 20"><path d="M3 9 l9 -3 v9 l-9 3 z" fill="#7aa8dc" stroke="#4a78b8" stroke-width="1"/><path d="M12 6 l6 -3 v9 l-6 3 z" fill="#a8c8ec" stroke="#4a78b8" stroke-width="1"/><circle cx="3" cy="18" r="1.7" fill="#e81818"/><circle cx="12" cy="15" r="1.7" fill="#e81818"/><circle cx="18" cy="12" r="1.7" fill="#e81818"/><circle cx="10" cy="18.5" r="1.7" fill="#e81818"/><polygon points="6.0,1.2 7.0,4.3 10.2,3.6 8.0,6.0 10.2,8.4 7.0,7.7 6.0,10.8 5.0,7.7 1.8,8.4 4.0,6.0 1.8,3.6 5.0,4.3" fill="#f7ec1c" stroke="#b8a000" stroke-width=".6"/></svg>
<svg class="b" style="left:454px;top:88px;" width="8" height="5" viewBox="0 0 8 5"><path d="M0 0 H8 L4 4.500 Z" fill="#222"/></svg>
<svg class="b" style="left:468px;top:80px;" width="20" height="20" viewBox="0 0 20 20"><path d="M4 9 h11 v10 h-11 z" fill="#8ab8e8" stroke="#4a78b8" stroke-width=".8"/><path d="M15 9 l3 -2 v10 l-3 2 z" fill="#5a88c8"/><rect x="8.5" y="2.5" width="10" height="7" fill="#ececec" stroke="#555" stroke-width="1"/><rect x="8.5" y="2.5" width="10" height="2.600" fill="#666"/><rect x="11.0" y="3.1" width="6.5" height="1.400" fill="#3048e0"/><polygon points="5.0,2.2 6.0,5.3 9.2,4.6 7.0,7.0 9.2,9.4 6.0,8.7 5.0,11.8 4.0,8.7 0.8,9.4 3.0,7.0 0.8,4.6 4.0,5.3" fill="#f7ec1c" stroke="#b8a000" stroke-width=".6"/></svg>
<div class="b" style="left:494px;top:80px;width:1px;height:21px;background:#d8d8d8;"></div>
<svg class="b" style="left:500px;top:80px;" width="20" height="20" viewBox="0 0 20 20"><path d="M9 3 V13" stroke="#6a9ad8" stroke-width="1.200"/><path d="M7 12 L9 15 L11 12 Z" fill="#6a9ad8"/><circle cx="9" cy="17.5" r="1.8" fill="#e81818"/><polygon points="6.0,2.2 7.0,5.3 10.2,4.6 8.0,7.0 10.2,9.4 7.0,8.7 6.0,11.8 5.0,8.7 1.8,9.4 4.0,7.0 1.8,4.6 5.0,5.3" fill="#f7ec1c" stroke="#b8a000" stroke-width=".6"/></svg>
<svg class="b" style="left:526px;top:80px;" width="20" height="20" viewBox="0 0 20 20"><path d="M5 6 h12" stroke="#6a9ad8" stroke-width="1.200"/><path d="M5 6 V13" stroke="#6a9ad8" stroke-width="1.200"/><path d="M3 12 L5 15 L7 12 Z" fill="#6a9ad8"/><path d="M9 6 V13" stroke="#6a9ad8" stroke-width="1.200"/><path d="M7 12 L9 15 L11 12 Z" fill="#6a9ad8"/><path d="M13 6 V13" stroke="#6a9ad8" stroke-width="1.200"/><path d="M11 12 L13 15 L15 12 Z" fill="#6a9ad8"/><path d="M17 6 V13" stroke="#6a9ad8" stroke-width="1.200"/><path d="M15 12 L17 15 L19 12 Z" fill="#6a9ad8"/><path d="M3 17.500 h16" stroke="#222" stroke-width="1.400"/><circle cx="3" cy="17.5" r="1.8" fill="#e81818"/><circle cx="19" cy="17.5" r="1.8" fill="#e81818"/><polygon points="7.0,2.2 8.0,5.3 11.2,4.6 9.0,7.0 11.2,9.4 8.0,8.7 7.0,11.8 6.0,8.7 2.8,9.4 5.0,7.0 2.8,4.6 6.0,5.3" fill="#f7ec1c" stroke="#b8a000" stroke-width=".6"/></svg>
<svg class="b" style="left:552px;top:80px;" width="20" height="20" viewBox="0 0 20 20"><path d="M5 6 h12" stroke="#6a9ad8" stroke-width="1.200"/><path d="M5 6 V13" stroke="#6a9ad8" stroke-width="1.200"/><path d="M3 12 L5 15 L7 12 Z" fill="#6a9ad8"/><path d="M9 6 V13" stroke="#6a9ad8" stroke-width="1.200"/><path d="M7 12 L9 15 L11 12 Z" fill="#6a9ad8"/><path d="M13 6 V13" stroke="#6a9ad8" stroke-width="1.200"/><path d="M11 12 L13 15 L15 12 Z" fill="#6a9ad8"/><path d="M17 6 V13" stroke="#6a9ad8" stroke-width="1.200"/><path d="M15 12 L17 15 L19 12 Z" fill="#6a9ad8"/><rect x="3" y="15.500" width="16" height="3" fill="#a8c8ec" stroke="#4a78b8" stroke-width=".7"/><circle cx="3" cy="17.5" r="1.8" fill="#e81818"/><circle cx="19" cy="17.5" r="1.8" fill="#e81818"/><polygon points="7.0,2.2 8.0,5.3 11.2,4.6 9.0,7.0 11.2,9.4 8.0,8.7 7.0,11.8 6.0,8.7 2.8,9.4 5.0,7.0 2.8,4.6 6.0,5.3" fill="#f7ec1c" stroke="#b8a000" stroke-width=".6"/></svg>
<svg class="b" style="left:578px;top:80px;" width="20" height="20" viewBox="0 0 20 20"><path d="M5 6 h12 l2 -2" stroke="#6a9ad8" stroke-width="1.200" fill="none"/><path d="M5 6 V12" stroke="#6a9ad8" stroke-width="1.200"/><path d="M3 11 L5 14 L7 11 Z" fill="#6a9ad8"/><path d="M9 6 V12" stroke="#6a9ad8" stroke-width="1.200"/><path d="M7 11 L9 14 L11 11 Z" fill="#6a9ad8"/><path d="M13 6 V12" stroke="#6a9ad8" stroke-width="1.200"/><path d="M11 11 L13 14 L15 11 Z" fill="#6a9ad8"/><path d="M17 6 V12" stroke="#6a9ad8" stroke-width="1.200"/><path d="M15 11 L17 14 L19 11 Z" fill="#6a9ad8"/><path d="M3 17 l3 -3 h13 l-3 3 z" fill="#a8c8ec" stroke="#4a78b8" stroke-width=".7"/><circle cx="3" cy="17" r="1.5" fill="#e81818"/><circle cx="10" cy="18" r="1.5" fill="#e81818"/><circle cx="16" cy="17" r="1.5" fill="#e81818"/><circle cx="6" cy="14" r="1.3" fill="#e81818"/><polygon points="7.0,2.2 8.0,5.3 11.2,4.6 9.0,7.0 11.2,9.4 8.0,8.7 7.0,11.8 6.0,8.7 2.8,9.4 5.0,7.0 2.8,4.6 6.0,5.3" fill="#f7ec1c" stroke="#b8a000" stroke-width=".6"/></svg>
<svg class="b" style="left:605px;top:80px;" width="20" height="20" viewBox="0 0 20 20"><path d="M4 4 q2 12 11 14" fill="none" stroke="#22a83a" stroke-width="1.600"/><path d="M8 3 l6 14 M10 2 v14 M8 3 l4 1" stroke="#222" stroke-width="1" stroke-dasharray="2 1.200"/><path d="M13 12.500 h6 M13 18.500 h6 M16 12.500 v6" stroke="#222" stroke-width="1.400"/><polygon points="5.0,2.2 6.0,5.3 9.2,4.6 7.0,7.0 9.2,9.4 6.0,8.7 5.0,11.8 4.0,8.7 0.8,9.4 3.0,7.0 0.8,4.6 4.0,5.3" fill="#f7ec1c" stroke="#b8a000" stroke-width=".6"/></svg>
<svg class="b" style="left:630px;top:88px;" width="8" height="5" viewBox="0 0 8 5"><path d="M0 0 H8 L4 4.500 Z" fill="#222"/></svg>
<svg class="b" style="left:643px;top:80px;" width="20" height="20" viewBox="0 0 20 20"><path d="M8 7 l5.8500000000000005 7.2 h-11.700000000000001 z" fill="#2cc858"/><path d="M8 7 l5.8500000000000005 7.2 h-5.8500000000000005 z" fill="#1f9a3c"/><circle cx="8" cy="6.1" r="2.7" fill="#1f9a3c"/><circle cx="7.1" cy="5.2" r="1.08" fill="#7ae08c"/><path d="M10 13 l8 5" stroke="#e81818" stroke-width="1.200" stroke-dasharray="2 1.500"/><circle cx="10" cy="13" r="1.5" fill="#e81818"/><circle cx="18.5" cy="18" r="1.5" fill="#e81818"/><polygon points="4.0,3.2 4.8,5.6 7.3,5.1 5.6,7.0 7.3,8.9 4.8,8.4 4.0,10.8 3.2,8.4 0.7,8.9 2.4,7.0 0.7,5.1 3.2,5.6" fill="#f7ec1c" stroke="#b8a000" stroke-width=".6"/></svg>
<svg class="b" style="left:668px;top:88px;" width="8" height="5" viewBox="0 0 8 5"><path d="M0 0 H8 L4 4.500 Z" fill="#222"/></svg>
<div class="b" style="left:681px;top:78px;width:1px;height:26px;background:#dcdcdc;"></div>
<svg class="b" style="left:686px;top:80px;" width="4" height="21" viewBox="0 0 4 21"><rect x="1.200" y="0" width="1.600" height="1.600" fill="#c9c9c9"/><rect x=".2" y="1" width="1.400" height="1.400" fill="#d9d9d9"/><rect x="1.200" y="4" width="1.600" height="1.600" fill="#c9c9c9"/><rect x=".2" y="5" width="1.400" height="1.400" fill="#d9d9d9"/><rect x="1.200" y="8" width="1.600" height="1.600" fill="#c9c9c9"/><rect x=".2" y="9" width="1.400" height="1.400" fill="#d9d9d9"/><rect x="1.200" y="12" width="1.600" height="1.600" fill="#c9c9c9"/><rect x=".2" y="13" width="1.400" height="1.400" fill="#d9d9d9"/><rect x="1.200" y="16" width="1.600" height="1.600" fill="#c9c9c9"/><rect x=".2" y="17" width="1.400" height="1.400" fill="#d9d9d9"/></svg>
<svg class="b" style="left:693px;top:80px;" width="20" height="20" viewBox="0 0 20 20"><path d="M1 5 h14 l-5.500 6 v6 l-3 1.500 v-7.500 z" fill="#4a86e0"/><path d="M1 5 h14 l-2 2.200 h-10 z" fill="#2a62c0"/><rect x="9.5" y="1.5" width="9" height="6" fill="#ececec" stroke="#555" stroke-width="1"/><rect x="9.5" y="1.5" width="9" height="2.600" fill="#666"/><rect x="12.0" y="2.1" width="5.5" height="1.400" fill="#3048e0"/></svg>
<div class="b" style="left:718px;top:80px;width:1px;height:21px;background:#d8d8d8;"></div>
<svg class="b" style="left:725px;top:80px;" width="20" height="20" viewBox="0 0 20 20"><ellipse cx="10" cy="10" rx="8" ry="6.500" fill="none" stroke="#a8a8a8" stroke-width="1"/><path d="M5 16 v-9 h10 v9" fill="none" stroke="#888" stroke-width="2"/></svg>
<svg class="b" style="left:751px;top:80px;" width="20" height="20" viewBox="0 0 20 20"><path d="M2 4 l3 10 q5 8 10 0 l3 -10" fill="#d8d8d8" stroke="#888" stroke-width="1"/><path d="M2 4 l3 6 q5 10 10 0 l3 -6" fill="none" stroke="#999" stroke-width="1"/></svg>
<svg class="b" style="left:778px;top:80px;" width="20" height="20" viewBox="0 0 20 20"><path d="M2 12 q8 -6 17 -4 v5 q-8 -1 -12 3 z" fill="#b4b4b4"/><path d="M2 12 q8 -4 17 -2" stroke="#e4e4e4" fill="none" stroke-width="1"/></svg>
<svg class="b" style="left:804px;top:80px;" width="20" height="20" viewBox="0 0 20 20"><path d="M2 5 l3 -3 h13 v13 l-3 3 h-13 z" fill="#b8b8b8" stroke="#888" stroke-width="1"/><rect x="2" y="5" width="13" height="13" fill="#c8c8c8" stroke="#888" stroke-width="1"/><circle cx="8.500" cy="11.500" r="4" fill="#e8e8e8" stroke="#888" stroke-width="1"/><circle cx="8.500" cy="11.500" r="1.500" fill="#888"/></svg>
<svg class="b" style="left:831px;top:80px;" width="20" height="20" viewBox="0 0 20 20"><circle cx="6" cy="5" r="2.500" fill="#a8a8a8"/><path d="M2 10 l4 -3 l4 3 z" fill="#a8a8a8"/><path d="M6 12 l-3 3 h2 v4 h2 v-4 h2 z" fill="#c4c4c4" stroke="#999" stroke-width=".7"/><path d="M11 5 l3 -3 v2 h4 v2 h-4 v2 z" fill="#c4c4c4" stroke="#999" stroke-width=".7"/></svg>
<svg class="b" style="left:856px;top:80px;" width="20" height="20" viewBox="0 0 20 20"><path d="M2 16 q8 -3 17 -11 q-5 9 -14 13 z" fill="#b8b8b8"/></svg>
<div class="b" style="left:881px;top:80px;width:1px;height:21px;background:#d8d8d8;"></div>
<svg class="b" style="left:888px;top:80px;" width="20" height="20" viewBox="0 0 20 20"><path d="M2 14.500 q4 6 8 0 q4 -6 8 0" fill="none" stroke="#888" stroke-width="1.200"/><path d="M2 14.500 h16" stroke="#aaa" stroke-width=".8"/><path d="M3 6 h14" stroke="#777" stroke-width="1.600"/><path d="M1 6 l3 -2 v4 z M19 6 l-3 -2 v4 z" fill="#777"/></svg>
<svg class="b" style="left:914px;top:80px;" width="20" height="20" viewBox="0 0 20 20"><path d="M2 14.500 q4 6 8 0 q4 -6 8 0" fill="none" stroke="#888" stroke-width="1.200"/><path d="M2 14.500 h16" stroke="#aaa" stroke-width=".8"/><rect x="3" y="4" width="14" height="4" rx="2" fill="#b0b0b0"/><circle cx="4" cy="6" r="1.800" fill="#888"/><circle cx="16" cy="6" r="1.800" fill="#888"/></svg>
<svg class="b" style="left:940px;top:80px;" width="20" height="20" viewBox="0 0 20 20"><path d="M2 14.500 q4 6 8 0 q4 -6 8 0" fill="none" stroke="#888" stroke-width="1.200"/><path d="M2 14.500 h16" stroke="#aaa" stroke-width=".8"/><rect x="3" y="4" width="14" height="4" rx="2" fill="#b0b0b0"/><circle cx="6" cy="6" r="1.600" fill="#888"/><circle cx="10" cy="6" r="1.600" fill="#888"/><circle cx="14" cy="6" r="1.600" fill="#888"/></svg>
<svg class="b" style="left:982px;top:86px;" width="9" height="8" viewBox="0 0 9 8"><path d="M1 1 L4 4 L1 7 M5 1 L8 4 L5 7" fill="none" stroke="#555" stroke-width="1.100"/></svg>
<div class="b" style="left:992px;top:79px;width:1px;height:25px;background:#dcdcdc;"></div>
<svg class="b" style="left:996px;top:80px;" width="4" height="21" viewBox="0 0 4 21"><rect x="1.200" y="0" width="1.600" height="1.600" fill="#c9c9c9"/><rect x=".2" y="1" width="1.400" height="1.400" fill="#d9d9d9"/><rect x="1.200" y="4" width="1.600" height="1.600" fill="#c9c9c9"/><rect x=".2" y="5" width="1.400" height="1.400" fill="#d9d9d9"/><rect x="1.200" y="8" width="1.600" height="1.600" fill="#c9c9c9"/><rect x=".2" y="9" width="1.400" height="1.400" fill="#d9d9d9"/><rect x="1.200" y="12" width="1.600" height="1.600" fill="#c9c9c9"/><rect x=".2" y="13" width="1.400" height="1.400" fill="#d9d9d9"/><rect x="1.200" y="16" width="1.600" height="1.600" fill="#c9c9c9"/><rect x=".2" y="17" width="1.400" height="1.400" fill="#d9d9d9"/></svg>
<div class="b" style="left:1002px;top:80px;width:121px;height:22px;background:#e6e6f2;"></div>
<div class="b" style="left:1007px;top:85px;width:11px;height:11px;background:#ccffff;"></div>
<span class="t" style="left:1023px;top:83px;line-height:16px;transform:scaleX(0.8894);">1 - Global XYZ</span>
<svg class="b" style="left:1106px;top:87px;" width="12" height="8" viewBox="0 0 12 8"><path d="M1.500 1.500 L6 6 L10.500 1.500" fill="none" stroke="#444" stroke-width="1.200"/></svg>
<svg class="b" style="left:1127px;top:86px;" width="9" height="8" viewBox="0 0 9 8"><path d="M1 1 L4 4 L1 7 M5 1 L8 4 L5 7" fill="none" stroke="#555" stroke-width="1.100"/></svg>
<div class="b" style="left:1138px;top:79px;width:1px;height:25px;background:#dcdcdc;"></div>
<svg class="b" style="left:1142px;top:80px;" width="4" height="21" viewBox="0 0 4 21"><rect x="1.200" y="0" width="1.600" height="1.600" fill="#c9c9c9"/><rect x=".2" y="1" width="1.400" height="1.400" fill="#d9d9d9"/><rect x="1.200" y="4" width="1.600" height="1.600" fill="#c9c9c9"/><rect x=".2" y="5" width="1.400" height="1.400" fill="#d9d9d9"/><rect x="1.200" y="8" width="1.600" height="1.600" fill="#c9c9c9"/><rect x=".2" y="9" width="1.400" height="1.400" fill="#d9d9d9"/><rect x="1.200" y="12" width="1.600" height="1.600" fill="#c9c9c9"/><rect x=".2" y="13" width="1.400" height="1.400" fill="#d9d9d9"/><rect x="1.200" y="16" width="1.600" height="1.600" fill="#c9c9c9"/><rect x=".2" y="17" width="1.400" height="1.400" fill="#d9d9d9"/></svg>
<svg class="b" style="left:1150px;top:80px;" width="20" height="20" viewBox="0 0 20 20"><rect x="1.500" y="3.500" width="16" height="15" fill="#f0f0f0" stroke="#444" stroke-width="1.200"/><rect x="1.500" y="3.500" width="16" height="3" fill="#2a3a9c"/><path d="M3.500 9 h5 M3.500 11.500 h4 M3.500 14 h3" stroke="#555" stroke-width="1"/><path d="M16 8 v9 h-9 z" fill="#8ad878" stroke="#3a8a30" stroke-width="1"/></svg>
<svg class="b" style="left:1174px;top:88px;" width="8" height="5" viewBox="0 0 8 5"><path d="M0 0 H8 L4 4.500 Z" fill="#222"/></svg>
<svg class="b" style="left:1188px;top:86px;" width="9" height="8" viewBox="0 0 9 8"><path d="M1 1 L4 4 L1 7 M5 1 L8 4 L5 7" fill="none" stroke="#555" stroke-width="1.100"/></svg>
<div class="b" style="left:340px;top:105px;width:860px;height:770px;background:#fff;"></div>
<div class="b" style="left:340px;top:105px;width:4px;height:767px;background:#f4f4f6;"></div>
<span class="t" style="left:349px;top:110px;line-height:16px;color:#222;transform:scaleX(0.9931);">Sichtbarkeitsmodus</span>
<svg class="b" style="left:0;top:0" width="1200" height="900" viewBox="0 0 1200 900" font-family='Liberation Sans, sans-serif'><path d="M371.500 269.500 H990 A88 88 0 0 1 990 445.500 V866.500 H371.500 Z" fill="#c9c9c9" stroke="#8a8a8a" stroke-width="1"/><path d="M990 269.500 A88 88 0 0 1 990 445.500" fill="none" stroke="#6a6a6a" stroke-width=".9"/><path d="M989.500 269 V534" stroke="#777" stroke-width="1.200"/><path d="M986.500 445 V534" stroke="#aaa" stroke-width="1" stroke-dasharray="1 1"/><path d="M371.500 268 V866" stroke="#555" stroke-width="1"/><path d="M986 353 l8 8 m0 -8 l-8 8" stroke="#555" stroke-width="1"/><rect x="952" y="595" width="16" height="11" fill="#808080"/><path d="M371.5 733.5V821.5M378.2 733.5V821.5M384.9 733.5V821.5M391.7 733.5V821.5M398.4 733.5V821.5M405.1 733.5V821.5M411.8 733.5V821.5M418.5 733.5V821.5M425.3 733.5V821.5M432.0 733.5V821.5M371.5 733.5H437.5M371.5 740.2H437.5M371.5 746.9H437.5M371.5 753.7H437.5M371.5 760.4H437.5M371.5 767.1H437.5M371.5 773.8H437.5M371.5 780.5H437.5M371.5 787.3H437.5M371.5 794.0H437.5M371.5 800.7H437.5M371.5 807.4H437.5M371.5 814.1H437.5M371.5 820.9H437.5" stroke="#bd8268" stroke-width="0.85" fill="none"/><rect x="371.500" y="733.500" width="66" height="88" fill="#c08060" fill-opacity=".12" stroke="#b87858" stroke-width="1.300"/><path d="M570.5 733.5V821.5M577.3 733.5V821.5M584.0 733.5V821.5M590.8 733.5V821.5M597.6 733.5V821.5M604.3 733.5V821.5M611.1 733.5V821.5M617.9 733.5V821.5M624.7 733.5V821.5M631.4 733.5V821.5M638.2 733.5V821.5M645.0 733.5V821.5M651.7 733.5V821.5M658.5 733.5V821.5M570.5 733.5H658.5M570.5 740.3H658.5M570.5 747.0H658.5M570.5 753.8H658.5M570.5 760.6H658.5M570.5 767.3H658.5M570.5 774.1H658.5M570.5 780.9H658.5M570.5 787.7H658.5M570.5 794.4H658.5M570.5 801.2H658.5M570.5 808.0H658.5M570.5 814.7H658.5M570.5 821.5H658.5" stroke="#e8a828" stroke-width="0.85" fill="none"/><rect x="570.500" y="733.500" width="88" height="88" fill="#f0b030" fill-opacity=".15" stroke="#e8a020" stroke-width="1.300"/><circle cx="371.5" cy="733.5" r="2.200" fill="#b8785c"/><circle cx="437.5" cy="733.5" r="2.200" fill="#b8785c"/><circle cx="371.5" cy="821.5" r="2.200" fill="#b8785c"/><circle cx="437.5" cy="821.5" r="2.200" fill="#b8785c"/><circle cx="349" cy="733.5" r="2.200" fill="#b8785c"/><circle cx="349" cy="821.5" r="2.200" fill="#b8785c"/><circle cx="570.5" cy="733.5" r="2.200" fill="#e8a820"/><circle cx="658.5" cy="733.5" r="2.200" fill="#e8a820"/><circle cx="570.5" cy="821.5" r="2.200" fill="#e8a820"/><circle cx="658.5" cy="821.5" r="2.200" fill="#e8a820"/><text x="440" y="729" fill="#e09470" font-size="11">↑ 5.24 | 5.24</text><text x="661" y="818" fill="#f2c12a" font-size="11">↑ 5.24 | 5.24</text><rect x="385.5" y="769.5" width="15" height="15" fill="#f4b6b6" fill-opacity=".12" stroke="#f38a8a" stroke-width="1.800" stroke-dasharray="1 1"/><circle cx="385.5" cy="769.5" r="1.700" fill="#a8a0a4"/><circle cx="400.5" cy="769.5" r="1.700" fill="#a8a0a4"/><circle cx="385.5" cy="784.5" r="1.700" fill="#a8a0a4"/><circle cx="400.5" cy="784.5" r="1.700" fill="#a8a0a4"/><path d="M393 777 V808" stroke="#4fb406" stroke-width="2.300"/><path d="M389.2 807.5 L393 816.5 L396.8 807.5 Z" fill="#3a8612"/><text x="393" y="830.5" fill="#66b814" font-size="11" text-anchor="middle">v</text><path d="M393 777 H424" stroke="#f79a9a" stroke-width="1.400"/><path d="M423.5 773.8 L433 777 L423.5 780.2 Z" fill="#f08c8c"/><text x="443" y="780.5" fill="#f48c8c" font-size="11" text-anchor="middle">u</text><circle cx="393" cy="777" r="2.800" fill="#ee44ee"/><circle cx="392.4" cy="776.2" r="1" fill="#f9b0f9"/><path d="M383 776.500 h19 M392.500 767 v19" stroke="#555" stroke-width="2.200" stroke-opacity=".85"/><path d="M381.500 776.500 l5 -3.500 v7 z M403.500 776.500 l-5 -3.500 v7 z M392.500 765.500 l-3.500 5 h7 z M392.500 787.500 l-3.500 -5 h7 z" fill="#555" fill-opacity=".85"/><rect x="606.5" y="769.5" width="15" height="15" fill="#f4b6b6" fill-opacity=".12" stroke="#f38a8a" stroke-width="1.800" stroke-dasharray="1 1"/><circle cx="606.5" cy="769.5" r="1.700" fill="#a8a0a4"/><circle cx="621.5" cy="769.5" r="1.700" fill="#a8a0a4"/><circle cx="606.5" cy="784.5" r="1.700" fill="#a8a0a4"/><circle cx="621.5" cy="784.5" r="1.700" fill="#a8a0a4"/><path d="M614 777 V808" stroke="#4fb406" stroke-width="2.300"/><path d="M610.2 807.5 L614 816.5 L617.8 807.5 Z" fill="#3a8612"/><text x="614" y="830.5" fill="#66b814" font-size="11" text-anchor="middle">v</text><path d="M614 777 H645" stroke="#f79a9a" stroke-width="1.400"/><path d="M644.5 773.8 L654 777 L644.5 780.2 Z" fill="#f08c8c"/><text x="664" y="780.5" fill="#f48c8c" font-size="11" text-anchor="middle">u</text><circle cx="614" cy="777" r="2.800" fill="#ee44ee"/><circle cx="613.4" cy="776.2" r="1" fill="#f9b0f9"/><path d="M604 777 h20 M614 767 v20" stroke="#f0a020" stroke-width="2.200"/><path d="M603 777 l5 -3 v6 z M625 777 l-5 -3 v6 z M614 766 l-3 5 h6 z M614 788 l-3 -5 h6 z" fill="#f0a020"/><circle cx="614" cy="777" r="2.500" fill="#e23be2"/><rect x="827.5" y="769.5" width="15" height="15" fill="#f4b6b6" fill-opacity=".12" stroke="#f38a8a" stroke-width="1.800" stroke-dasharray="1 1"/><circle cx="827.5" cy="769.5" r="1.700" fill="#a8a0a4"/><circle cx="842.5" cy="769.5" r="1.700" fill="#a8a0a4"/><circle cx="827.5" cy="784.5" r="1.700" fill="#a8a0a4"/><circle cx="842.5" cy="784.5" r="1.700" fill="#a8a0a4"/><path d="M835 777 V808" stroke="#4fb406" stroke-width="2.300"/><path d="M831.2 807.5 L835 816.5 L838.8 807.5 Z" fill="#3a8612"/><text x="835" y="830.5" fill="#66b814" font-size="11" text-anchor="middle">v</text><path d="M835 777 H866" stroke="#f79a9a" stroke-width="1.400"/><path d="M865.5 773.8 L875 777 L865.5 780.2 Z" fill="#f08c8c"/><text x="885" y="780.5" fill="#f48c8c" font-size="11" text-anchor="middle">u</text><circle cx="835" cy="777" r="2.800" fill="#ee44ee"/><circle cx="834.4" cy="776.2" r="1" fill="#f9b0f9"/><rect x="960.5" y="769.5" width="15" height="15" fill="#f4b6b6" fill-opacity=".12" stroke="#f38a8a" stroke-width="1.800" stroke-dasharray="1 1"/><circle cx="960.5" cy="769.5" r="1.700" fill="#a8a0a4"/><circle cx="975.5" cy="769.5" r="1.700" fill="#a8a0a4"/><circle cx="960.5" cy="784.5" r="1.700" fill="#a8a0a4"/><circle cx="975.5" cy="784.5" r="1.700" fill="#a8a0a4"/><path d="M968 777 V808" stroke="#4fb406" stroke-width="2.300"/><path d="M964.2 807.5 L968 816.5 L971.8 807.5 Z" fill="#3a8612"/><text x="968" y="830.5" fill="#66b814" font-size="11" text-anchor="middle">v</text><path d="M968 777 H999" stroke="#f79a9a" stroke-width="1.400"/><path d="M998.5 773.8 L1008 777 L998.5 780.2 Z" fill="#f08c8c"/><text x="1018" y="780.5" fill="#f48c8c" font-size="11" text-anchor="middle">u</text><circle cx="968" cy="777" r="2.800" fill="#ee44ee"/><circle cx="967.4" cy="776.2" r="1" fill="#f9b0f9"/><rect x="960.5" y="593.0" width="15" height="15" fill="#f4b6b6" fill-opacity=".12" stroke="#f38a8a" stroke-width="1.800" stroke-dasharray="1 1"/><circle cx="960.5" cy="593.0" r="1.700" fill="#a8a0a4"/><circle cx="975.5" cy="593.0" r="1.700" fill="#a8a0a4"/><circle cx="960.5" cy="608.0" r="1.700" fill="#a8a0a4"/><circle cx="975.5" cy="608.0" r="1.700" fill="#a8a0a4"/><path d="M968 600.5 V631.5" stroke="#4fb406" stroke-width="2.300"/><path d="M964.2 631.0 L968 640.0 L971.8 631.0 Z" fill="#3a8612"/><text x="968" y="654.0" fill="#66b814" font-size="11" text-anchor="middle">v</text><path d="M968 600.5 H999" stroke="#f79a9a" stroke-width="1.400"/><path d="M998.5 597.3 L1008 600.5 L998.5 603.7 Z" fill="#f08c8c"/><text x="1018" y="604.0" fill="#f48c8c" font-size="11" text-anchor="middle">u</text><circle cx="968" cy="600.5" r="2.800" fill="#ee44ee"/><circle cx="967.4" cy="599.7" r="1" fill="#f9b0f9"/><rect x="982.5" y="437.5" width="15" height="15" fill="#f4b6b6" fill-opacity=".12" stroke="#f38a8a" stroke-width="1.800" stroke-dasharray="1 1"/><circle cx="982.5" cy="437.5" r="1.700" fill="#a8a0a4"/><circle cx="997.5" cy="437.5" r="1.700" fill="#a8a0a4"/><circle cx="982.5" cy="452.5" r="1.700" fill="#a8a0a4"/><circle cx="997.5" cy="452.5" r="1.700" fill="#a8a0a4"/><path d="M990 445 V476" stroke="#4fb406" stroke-width="2.300"/><path d="M986.2 475.5 L990 484.5 L993.8 475.5 Z" fill="#3a8612"/><text x="990" y="498.5" fill="#66b814" font-size="11" text-anchor="middle">v</text><path d="M990 445 H1021" stroke="#f79a9a" stroke-width="1.400"/><path d="M1020.5 441.8 L1030 445 L1020.5 448.2 Z" fill="#f08c8c"/><text x="1040" y="448.5" fill="#f48c8c" font-size="11" text-anchor="middle">u</text><circle cx="990" cy="445" r="2.800" fill="#ee44ee"/><circle cx="989.4" cy="444.2" r="1" fill="#f9b0f9"/><text x="393" y="654.500" fill="#66b814" font-size="11" text-anchor="middle">v</text><text x="614" y="654.500" fill="#66b814" font-size="11" text-anchor="middle">v</text><text x="835" y="654.500" fill="#66b814" font-size="11" text-anchor="middle">v</text><circle cx="990" cy="269.5" r="2.400" fill="#f01010"/><circle cx="990" cy="534" r="2.400" fill="#f01010"/><circle cx="371.5" cy="866" r="2.400" fill="#f01010"/><circle cx="990" cy="866" r="2.400" fill="#f01010"/><path d="M613 730 C640 690 680 668 722 669 C775 671 815 705 827 748" fill="none" stroke="#c00000" stroke-width="3.100" stroke-linecap="round"/><path d="M821.500 746.500 L831.500 743.500 L829.500 759.500 Z" fill="#c00000"/><rect x="1097.2" y="139.2" width="16.399999999999864" height="16.0" rx="1.500" fill="#fff" stroke="#75716f" stroke-width="1.700"/><rect x="1097.2" y="156.1" width="16.399999999999864" height="32.900000000000006" rx="1.500" fill="#fff" stroke="#75716f" stroke-width="1.700"/><rect x="1097.2" y="189.9" width="16.399999999999864" height="16.799999999999983" rx="1.500" fill="#fff" stroke="#75716f" stroke-width="1.700"/><rect x="1114.5" y="139.2" width="33.0" height="16.0" rx="1.500" fill="#fff" stroke="#75716f" stroke-width="1.700"/><rect x="1114.5" y="156.1" width="33.0" height="32.900000000000006" rx="1.500" fill="#fff" stroke="#75716f" stroke-width="1.700"/><rect x="1114.5" y="189.9" width="33.0" height="16.799999999999983" rx="1.500" fill="#fff" stroke="#75716f" stroke-width="1.700"/><rect x="1148.4" y="139.2" width="16.399999999999864" height="16.0" rx="1.500" fill="#fff" stroke="#75716f" stroke-width="1.700"/><rect x="1148.4" y="156.1" width="16.399999999999864" height="32.900000000000006" rx="1.500" fill="#fff" stroke="#75716f" stroke-width="1.700"/><rect x="1148.4" y="189.9" width="16.399999999999864" height="16.799999999999983" rx="1.500" fill="#fff" stroke="#75716f" stroke-width="1.700"/><text x="1121.700" y="180" fill="#2b2b94" stroke="#2b2b94" stroke-width=".45" font-size="15" font-weight="bold" textLength="19.300" lengthAdjust="spacingAndGlyphs">+Z</text></svg>
<span class="t" style="left:1096px;top:857px;line-height:16px;transform:scaleX(1.0029);">Abmessungen [m]</span>
<div class="b" style="left:1px;top:105px;width:339px;height:770px;background:#f0f0f0;"></div>
<div class="b" style="left:1px;top:105px;width:339px;height:22px;background:#d9e5f3;"></div>
<span class="t" style="left:7px;top:108px;line-height:16px;color:#36435a;font-weight:bold;transform:scaleX(1.0165);">Navigator - Daten</span>
<svg class="b" style="left:300px;top:109px;" width="36" height="14" viewBox="0 0 36 14">
<path d="M3.500 5.500 h5 v5 h-5 z M5.500 5 v-2.500 h5 v5 h-2" fill="none" stroke="#333" stroke-width="1.300"/>
<path d="M23.500 3.500 L30.500 10.500 M30.500 3.500 L23.500 10.500" stroke="#222" stroke-width="1.800"/>
</svg>
<div class="b" style="left:3px;top:127px;width:336px;height:720px;background:#fff;border:1px solid #b9b9c9;box-sizing:border-box;"></div>
<div class="b" style="left:4px;top:128px;width:318px;height:703px;overflow:hidden;"><div class="b" style="left:80px;top:235px;width:260px;height:17px;background:#cce4f7;"></div><svg class="b" style="left:24px;top:5px;" width="10" height="10" viewBox="0 0 10 10"><path d="M3 1 L7 5 L3 9" fill="none" stroke="#a3a3a3" stroke-width="1.800"/></svg><svg class="b" style="left:43px;top:2px;" width="16" height="16" viewBox="0 0 16 16"><path d="M.5 1.800 q0 -.8 .8 -.8 h4.700 l1.500 1.500 h7.200 q.8 0 .8 .8 v10.400 q0 .8 -.8 .8 h-13.400 q-.8 0 -.8 -.8 z" fill="#f6eeb2" stroke="#d9cc84" stroke-width="1"/></svg><span class="t" style="left:64px;top:2px;line-height:16px;transform:scaleX(0.9530);">Spezielle Objekte</span><svg class="b" style="left:24px;top:23px;" width="10" height="10" viewBox="0 0 10 10"><path d="M3 1 L7 5 L3 9" fill="none" stroke="#a3a3a3" stroke-width="1.800"/></svg><svg class="b" style="left:43px;top:20px;" width="16" height="16" viewBox="0 0 16 16"><path d="M.5 1.800 q0 -.8 .8 -.8 h4.700 l1.500 1.500 h7.200 q.8 0 .8 .8 v10.400 q0 .8 -.8 .8 h-13.400 q-.8 0 -.8 -.8 z" fill="#f6eeb2" stroke="#d9cc84" stroke-width="1"/></svg><span class="t" style="left:64px;top:20px;line-height:16px;transform:scaleX(0.9627);">Typen für Knoten</span><svg class="b" style="left:24px;top:41px;" width="10" height="10" viewBox="0 0 10 10"><path d="M3 1 L7 5 L3 9" fill="none" stroke="#a3a3a3" stroke-width="1.800"/></svg><svg class="b" style="left:43px;top:38px;" width="16" height="16" viewBox="0 0 16 16"><path d="M.5 1.800 q0 -.8 .8 -.8 h4.700 l1.500 1.500 h7.200 q.8 0 .8 .8 v10.400 q0 .8 -.8 .8 h-13.400 q-.8 0 -.8 -.8 z" fill="#f6eeb2" stroke="#d9cc84" stroke-width="1"/></svg><span class="t" style="left:64px;top:38px;line-height:16px;transform:scaleX(0.9603);">Typen für Linien</span><svg class="b" style="left:24px;top:59px;" width="10" height="10" viewBox="0 0 10 10"><path d="M3 1 L7 5 L3 9" fill="none" stroke="#a3a3a3" stroke-width="1.800"/></svg><svg class="b" style="left:43px;top:56px;" width="16" height="16" viewBox="0 0 16 16"><path d="M.5 1.800 q0 -.8 .8 -.8 h4.700 l1.500 1.500 h7.200 q.8 0 .8 .8 v10.400 q0 .8 -.8 .8 h-13.400 q-.8 0 -.8 -.8 z" fill="#f6eeb2" stroke="#d9cc84" stroke-width="1"/></svg><span class="t" style="left:64px;top:56px;line-height:16px;transform:scaleX(0.9441);">Typen für Stäbe</span><svg class="b" style="left:24px;top:77px;" width="10" height="10" viewBox="0 0 10 10"><path d="M3 1 L7 5 L3 9" fill="none" stroke="#a3a3a3" stroke-width="1.800"/></svg><svg class="b" style="left:43px;top:74px;" width="16" height="16" viewBox="0 0 16 16"><path d="M.5 1.800 q0 -.8 .8 -.8 h4.700 l1.500 1.500 h7.200 q.8 0 .8 .8 v10.400 q0 .8 -.8 .8 h-13.400 q-.8 0 -.8 -.8 z" fill="#f6eeb2" stroke="#d9cc84" stroke-width="1"/></svg><span class="t" style="left:64px;top:74px;line-height:16px;transform:scaleX(0.9473);">Typen für Flächen</span><svg class="b" style="left:24px;top:95px;" width="10" height="10" viewBox="0 0 10 10"><path d="M3 1 L7 5 L3 9" fill="none" stroke="#a3a3a3" stroke-width="1.800"/></svg><svg class="b" style="left:43px;top:92px;" width="16" height="16" viewBox="0 0 16 16"><path d="M.5 1.800 q0 -.8 .8 -.8 h4.700 l1.500 1.500 h7.200 q.8 0 .8 .8 v10.400 q0 .8 -.8 .8 h-13.400 q-.8 0 -.8 -.8 z" fill="#f6eeb2" stroke="#d9cc84" stroke-width="1"/></svg><span class="t" style="left:64px;top:92px;line-height:16px;transform:scaleX(0.9696);">Typen für Volumenkörper</span><svg class="b" style="left:24px;top:113px;" width="10" height="10" viewBox="0 0 10 10"><path d="M3 1 L7 5 L3 9" fill="none" stroke="#a3a3a3" stroke-width="1.800"/></svg><svg class="b" style="left:43px;top:110px;" width="16" height="16" viewBox="0 0 16 16"><path d="M.5 1.800 q0 -.8 .8 -.8 h4.700 l1.500 1.500 h7.200 q.8 0 .8 .8 v10.400 q0 .8 -.8 .8 h-13.400 q-.8 0 -.8 -.8 z" fill="#f6eeb2" stroke="#d9cc84" stroke-width="1"/></svg><span class="t" style="left:64px;top:110px;line-height:16px;transform:scaleX(0.9603);">Typen für spezielle Objekte</span><svg class="b" style="left:24px;top:131px;" width="10" height="10" viewBox="0 0 10 10"><path d="M1 3 L5 7 L9 3" fill="none" stroke="#404040" stroke-width="1.800"/></svg><svg class="b" style="left:43px;top:128px;" width="16" height="16" viewBox="0 0 16 16"><path d="M1.500 1.800 h5 l1.500 1.500 h6.500 v10.700 h-13 z" fill="#faf5d4" stroke="#d9cc84" stroke-width="1"/><path d="M.8 14.500 l1.200 -9.500 h13.500 l-.8 9.500 z" fill="#f6eeb2" stroke="#d9cc84" stroke-width="1"/></svg><span class="t" style="left:64px;top:128px;line-height:16px;transform:scaleX(0.9539);">Typen für Betonbemessung</span><svg class="b" style="left:44px;top:149px;" width="10" height="10" viewBox="0 0 10 10"><path d="M3 1 L7 5 L3 9" fill="none" stroke="#a3a3a3" stroke-width="1.800"/></svg><svg class="b" style="left:63px;top:146px;" width="16" height="16" viewBox="0 0 16 16"><path d="M8 2 v12" stroke="#888" stroke-width="1"/><path d="M8 3 q-5 2.500 0 5.500 q5 3 0 5.500" fill="none" stroke="#e8401c" stroke-width="1.400"/><path d="M8 3 q5 2.500 0 5.500" fill="none" stroke="#30b8c8" stroke-width="1.100"/><path d="M5.500 2.500 l2.500 -2 l2.500 2 z" fill="#d22"/><path d="M5.500 9 h5 M5 14.500 h6" stroke="#d22" stroke-width="1.600"/></svg><span class="t" style="left:84px;top:146px;line-height:16px;transform:scaleX(0.9634);">Knicklängen</span><svg class="b" style="left:44px;top:167px;" width="10" height="10" viewBox="0 0 10 10"><path d="M3 1 L7 5 L3 9" fill="none" stroke="#a3a3a3" stroke-width="1.800"/></svg><svg class="b" style="left:63px;top:164px;" width="16" height="16" viewBox="0 0 16 16"><path d="M2 7 l6 -5 h7 l-6 5 z" fill="#c4c4c4" stroke="#666" stroke-width=".7"/><path d="M2 7 h7 v8 h-7 z" fill="#9a9aa0" stroke="#555" stroke-width=".8"/><path d="M9 7 l6 -5 v7 l-6 6 z" fill="#7c7c7c" stroke="#555" stroke-width=".7"/><path d="M0 5 l5 -4 M11 15.500 l5 -5" stroke="#40d8e8" stroke-width="1"/><circle cx="4" cy="12.800" r=".7" fill="#2a2ae0"/><circle cx="6.500" cy="12.800" r=".7" fill="#2a2ae0"/></svg><span class="t" style="left:84px;top:164px;line-height:16px;transform:scaleX(0.9722);">Betondauerhaftigkeiten</span><svg class="b" style="left:44px;top:185px;" width="10" height="10" viewBox="0 0 10 10"><path d="M3 1 L7 5 L3 9" fill="none" stroke="#a3a3a3" stroke-width="1.800"/></svg><svg class="b" style="left:63px;top:182px;" width="16" height="16" viewBox="0 0 16 16"><path d="M1 11 l7 -9 h7.500 l-5.500 9 z" fill="#d4d4dc" stroke="#8a8a94" stroke-width=".8"/><path d="M3.500 8 h8.500 M5.500 5 h8.500 M4 11 l7 -9 M7 11 l6.500 -9" stroke="#5a5ae8" stroke-width="1"/><path d="M1 11 h9 v3.500 h-9 z" fill="#8a8a8a" stroke="#6a6a6a" stroke-width=".6"/><path d="M10 11 l5.500 -9 v3.500 l-5.500 9 z" fill="#a4a4a4"/><circle cx="3" cy="12.800" r=".8" fill="#2a2ae0"/><circle cx="5.500" cy="12.800" r=".8" fill="#2a2ae0"/><circle cx="8" cy="12.800" r=".8" fill="#2a2ae0"/></svg><span class="t" style="left:84px;top:182px;line-height:16px;transform:scaleX(0.9776);">Bewehrungsrichtungen</span><svg class="b" style="left:44px;top:203px;" width="10" height="10" viewBox="0 0 10 10"><path d="M1 3 L5 7 L9 3" fill="none" stroke="#404040" stroke-width="1.800"/></svg><svg class="b" style="left:63px;top:200px;" width="16" height="16" viewBox="0 0 16 16"><path d="M1 11 l7 -9 h7.500 l-5.500 9 z" fill="#d4d4dc" stroke="#8a8a94" stroke-width=".8"/><path d="M3.500 11 l7 -9 M6 11 l7 -9 M8.500 11 l6 -9" stroke="#7a7ae8" stroke-width="1"/><path d="M1 11 h9 v3.500 h-9 z" fill="#8a8a8a" stroke="#6a6a6a" stroke-width=".6"/><path d="M10 11 l5.500 -9 v3.500 l-5.500 9 z" fill="#a4a4a4"/><circle cx="3" cy="12.800" r=".8" fill="#2a2ae0"/><circle cx="5.500" cy="12.800" r=".8" fill="#2a2ae0"/><circle cx="8" cy="12.800" r=".8" fill="#2a2ae0"/></svg><span class="t" style="left:84px;top:200px;line-height:16px;transform:scaleX(0.9704);">Flächenbewehrungen</span><div class="b" style="left:83px;top:219px;width:11px;height:11px;background:#ccffff;"></div><span class="t" style="left:99px;top:218px;line-height:16px;transform:scaleX(0.9487);">1 - Auf Fläche | Matte</span><div class="b" style="left:83px;top:237px;width:11px;height:11px;background:#a8a63e;"></div><span class="t" style="left:99px;top:236px;line-height:16px;transform:scaleX(0.9089);">2 - Freirechteck | Be</span><div class="b" style="left:83px;top:255px;width:11px;height:11px;background:#78b400;"></div><span class="t" style="left:99px;top:254px;line-height:16px;transform:scaleX(0.9089);">4 - Freirechteck | Be</span><div class="b" style="left:83px;top:273px;width:11px;height:11px;background:#ff0000;"></div><span class="t" style="left:99px;top:272px;line-height:16px;transform:scaleX(0.9089);">5 - Freirechteck | Be</span><div class="b" style="left:83px;top:291px;width:11px;height:11px;background:#8c8cff;"></div><span class="t" style="left:99px;top:290px;line-height:16px;transform:scaleX(0.9089);">6 - Freirechteck | Be</span><svg class="b" style="left:24px;top:311px;" width="10" height="10" viewBox="0 0 10 10"><path d="M3 1 L7 5 L3 9" fill="none" stroke="#a3a3a3" stroke-width="1.800"/></svg><svg class="b" style="left:43px;top:308px;" width="16" height="16" viewBox="0 0 16 16"><path d="M.5 1.800 q0 -.8 .8 -.8 h4.700 l1.500 1.500 h7.200 q.8 0 .8 .8 v10.400 q0 .8 -.8 .8 h-13.400 q-.8 0 -.8 -.8 z" fill="#f6eeb2" stroke="#d9cc84" stroke-width="1"/></svg><span class="t" style="left:64px;top:308px;line-height:16px;transform:scaleX(0.9951);">Imperfektionen</span><svg class="b" style="left:24px;top:329px;" width="10" height="10" viewBox="0 0 10 10"><path d="M1 3 L5 7 L9 3" fill="none" stroke="#404040" stroke-width="1.800"/></svg><svg class="b" style="left:43px;top:326px;" width="16" height="16" viewBox="0 0 16 16"><path d="M1.500 1.800 h5 l1.500 1.500 h6.500 v10.700 h-13 z" fill="#faf5d4" stroke="#d9cc84" stroke-width="1"/><path d="M.8 14.500 l1.200 -9.500 h13.500 l-.8 9.500 z" fill="#f6eeb2" stroke="#d9cc84" stroke-width="1"/></svg><span class="t" style="left:64px;top:326px;line-height:16px;transform:scaleX(0.9640);">Lastfälle und Kombinationen</span><svg class="b" style="left:44px;top:347px;" width="10" height="10" viewBox="0 0 10 10"><path d="M3 1 L7 5 L3 9" fill="none" stroke="#a3a3a3" stroke-width="1.800"/></svg><svg class="b" style="left:63px;top:344px;" width="16" height="16" viewBox="0 0 16 16"><path d="M5 1.500 v8" stroke="#4a86d8" stroke-width="1.300"/><path d="M2.500 8 l2.500 4 l2.500 -4 z" fill="#4a86d8"/><path d="M0 14 h16" stroke="#333" stroke-width="1.300"/></svg><span class="t" style="left:84px;top:344px;line-height:16px;transform:scaleX(0.9395);">Lastfälle</span><svg class="b" style="left:44px;top:365px;" width="10" height="10" viewBox="0 0 10 10"><path d="M3 1 L7 5 L3 9" fill="none" stroke="#a3a3a3" stroke-width="1.800"/></svg><svg class="b" style="left:63px;top:362px;" width="16" height="16" viewBox="0 0 16 16"><rect x="1.500" y="2.500" width="5" height="3" fill="#fff" stroke="#555" stroke-width=".9"/><rect x="1.500" y="11.500" width="5" height="3" fill="#fff" stroke="#555" stroke-width=".9"/><path d="M7 4 q4.500 0 5.500 3 M7 13 q4 0 5 -3" fill="none" stroke="#444" stroke-width="1"/><path d="M13.500 7.800 l-2.800 -1 l1.800 -1.600 z M12.800 9 l-1 2.800 l-1.800 -1.800 z" fill="#444"/><circle cx="13" cy="8.500" r="2.600" fill="#5590f0"/></svg><span class="t" style="left:84px;top:362px;line-height:16px;transform:scaleX(0.9855);">Einwirkungen</span><svg class="b" style="left:44px;top:383px;" width="10" height="10" viewBox="0 0 10 10"><path d="M3 1 L7 5 L3 9" fill="none" stroke="#a3a3a3" stroke-width="1.800"/></svg><svg class="b" style="left:63px;top:380px;" width="16" height="16" viewBox="0 0 16 16"><rect x="1.500" y="2.500" width="5" height="3" fill="#5b8fe0" stroke="#5b8fe0" stroke-width=".9"/><rect x="1.500" y="11.500" width="5" height="3" fill="#2fae3a" stroke="#2fae3a" stroke-width=".9"/><path d="M7 4 q4.500 0 5.500 3 M7 13 q4 0 5 -3" fill="none" stroke="#444" stroke-width="1"/><path d="M13.500 7.800 l-2.800 -1 l1.800 -1.600 z M12.800 9 l-1 2.800 l-1.800 -1.800 z" fill="#444"/><rect x="10.500" y="6" width="5.500" height="5" fill="#f018f0"/></svg><span class="t" style="left:84px;top:380px;line-height:16px;transform:scaleX(0.9418);">Bemessungssituationen</span><svg class="b" style="left:44px;top:401px;" width="10" height="10" viewBox="0 0 10 10"><path d="M3 1 L7 5 L3 9" fill="none" stroke="#a3a3a3" stroke-width="1.800"/></svg><svg class="b" style="left:63px;top:398px;" width="16" height="16" viewBox="0 0 16 16"><rect x="1.500" y="2.500" width="5" height="3" fill="#fff" stroke="#555" stroke-width=".9"/><rect x="1.500" y="11.500" width="5" height="3" fill="#fff" stroke="#555" stroke-width=".9"/><path d="M7 4 q4.500 0 5.500 3 M7 13 q4 0 5 -3" fill="none" stroke="#444" stroke-width="1"/><path d="M13.500 7.800 l-2.800 -1 l1.800 -1.600 z M12.800 9 l-1 2.800 l-1.800 -1.800 z" fill="#444"/><path d="M13 5.500 l3 3 l-3 3 l-3 -3 z" fill="#5590f0"/></svg><span class="t" style="left:84px;top:398px;line-height:16px;transform:scaleX(0.9947);">Einwirkungskombinationen</span><svg class="b" style="left:44px;top:419px;" width="10" height="10" viewBox="0 0 10 10"><path d="M3 1 L7 5 L3 9" fill="none" stroke="#a3a3a3" stroke-width="1.800"/></svg><svg class="b" style="left:63px;top:416px;" width="16" height="16" viewBox="0 0 16 16"><rect x="1.500" y="2.500" width="5" height="3" fill="#fff" stroke="#555" stroke-width=".9"/><rect x="1.500" y="11.500" width="5" height="3" fill="#fff" stroke="#555" stroke-width=".9"/><path d="M7 4 q4.500 0 5.500 3 M7 13 q4 0 5 -3" fill="none" stroke="#444" stroke-width="1"/><path d="M13.500 7.800 l-2.800 -1 l1.800 -1.600 z M12.800 9 l-1 2.800 l-1.800 -1.800 z" fill="#444"/><rect x="10.500" y="6" width="5" height="5" fill="#22b040"/></svg><span class="t" style="left:84px;top:416px;line-height:16px;transform:scaleX(0.9828);">Lastkombinationen</span><svg class="b" style="left:44px;top:437px;" width="10" height="10" viewBox="0 0 10 10"><path d="M3 1 L7 5 L3 9" fill="none" stroke="#a3a3a3" stroke-width="1.800"/></svg><svg class="b" style="left:63px;top:434px;" width="16" height="16" viewBox="0 0 16 16"><path d="M1 8 L15 2.500 V8 Z" fill="#d83a2a"/><path d="M1 8 H10 L1 10.500 Z" fill="#2a4ea8"/><circle cx="11.500" cy="11.500" r="3.400" fill="#5b8fe0"/><circle cx="11.500" cy="11.500" r="3.400" fill="none" stroke="#5b8fe0" stroke-width="1.600" stroke-dasharray="1.300 1.300"/><circle cx="11.500" cy="11.500" r="1.300" fill="#fff"/></svg><span class="t" style="left:84px;top:434px;line-height:16px;transform:scaleX(0.9497);">Statikanalyse-Einstellungen</span><svg class="b" style="left:44px;top:455px;" width="10" height="10" viewBox="0 0 10 10"><path d="M3 1 L7 5 L3 9" fill="none" stroke="#a3a3a3" stroke-width="1.800"/></svg><svg class="b" style="left:63px;top:452px;" width="16" height="16" viewBox="0 0 16 16"><rect x="1.500" y="2.500" width="5" height="3" fill="#fff" stroke="#555" stroke-width=".9"/><rect x="1.500" y="11.500" width="5" height="3" fill="#fff" stroke="#555" stroke-width=".9"/><path d="M7 4 q4.500 0 5.500 3 M7 13 q4 0 5 -3" fill="none" stroke="#444" stroke-width="1"/><path d="M13.500 7.800 l-2.800 -1 l1.800 -1.600 z M12.800 9 l-1 2.800 l-1.800 -1.800 z" fill="#444"/><rect x="11" y="6.500" width="4.500" height="4.500" fill="#fff" stroke="#333" stroke-width="1"/></svg><span class="t" style="left:84px;top:452px;line-height:16px;transform:scaleX(0.9444);">Kombinationsassistenten</span><svg class="b" style="left:24px;top:473px;" width="10" height="10" viewBox="0 0 10 10"><path d="M3 1 L7 5 L3 9" fill="none" stroke="#a3a3a3" stroke-width="1.800"/></svg><svg class="b" style="left:43px;top:470px;" width="16" height="16" viewBox="0 0 16 16"><path d="M.5 1.800 q0 -.8 .8 -.8 h4.700 l1.500 1.500 h7.200 q.8 0 .8 .8 v10.400 q0 .8 -.8 .8 h-13.400 q-.8 0 -.8 -.8 z" fill="#f6eeb2" stroke="#d9cc84" stroke-width="1"/></svg><span class="t" style="left:64px;top:470px;line-height:16px;transform:scaleX(0.9354);">Lastassistenten</span><svg class="b" style="left:24px;top:491px;" width="10" height="10" viewBox="0 0 10 10"><path d="M1 3 L5 7 L9 3" fill="none" stroke="#404040" stroke-width="1.800"/></svg><svg class="b" style="left:43px;top:488px;" width="16" height="16" viewBox="0 0 16 16"><path d="M1.500 1.800 h5 l1.500 1.500 h6.500 v10.700 h-13 z" fill="#faf5d4" stroke="#d9cc84" stroke-width="1"/><path d="M.8 14.500 l1.200 -9.500 h13.500 l-.8 9.500 z" fill="#f6eeb2" stroke="#d9cc84" stroke-width="1"/></svg><span class="t" style="left:64px;top:488px;line-height:16px;transform:scaleX(0.8881);">Lasten</span><svg class="b" style="left:44px;top:509px;" width="10" height="10" viewBox="0 0 10 10"><path d="M3 1 L7 5 L3 9" fill="none" stroke="#a3a3a3" stroke-width="1.800"/></svg><svg class="b" style="left:63px;top:506px;" width="16" height="16" viewBox="0 0 16 16"><path d="M.5 1.800 q0 -.8 .8 -.8 h4.700 l1.500 1.500 h7.200 q.8 0 .8 .8 v10.400 q0 .8 -.8 .8 h-13.400 q-.8 0 -.8 -.8 z" fill="#f6eeb2" stroke="#d9cc84" stroke-width="1"/></svg><span class="t" style="left:84px;top:506px;line-height:16px;transform:scaleX(0.9442);">LF1 - Eigengewicht</span><svg class="b" style="left:44px;top:527px;" width="10" height="10" viewBox="0 0 10 10"><path d="M3 1 L7 5 L3 9" fill="none" stroke="#a3a3a3" stroke-width="1.800"/></svg><svg class="b" style="left:63px;top:524px;" width="16" height="16" viewBox="0 0 16 16"><path d="M.5 1.800 q0 -.8 .8 -.8 h4.700 l1.500 1.500 h7.200 q.8 0 .8 .8 v10.400 q0 .8 -.8 .8 h-13.400 q-.8 0 -.8 -.8 z" fill="#f6eeb2" stroke="#d9cc84" stroke-width="1"/></svg><span class="t" style="left:84px;top:524px;line-height:16px;transform:scaleX(0.9378);">LF2 - Zusätzliches Eigengewicht</span><svg class="b" style="left:44px;top:545px;" width="10" height="10" viewBox="0 0 10 10"><path d="M3 1 L7 5 L3 9" fill="none" stroke="#a3a3a3" stroke-width="1.800"/></svg><svg class="b" style="left:63px;top:542px;" width="16" height="16" viewBox="0 0 16 16"><path d="M.5 1.800 q0 -.8 .8 -.8 h4.700 l1.500 1.500 h7.200 q.8 0 .8 .8 v10.400 q0 .8 -.8 .8 h-13.400 q-.8 0 -.8 -.8 z" fill="#f6eeb2" stroke="#d9cc84" stroke-width="1"/></svg><span class="t" style="left:84px;top:542px;line-height:16px;transform:scaleX(0.9230);">LF3 - Veränderliche Lasten</span><svg class="b" style="left:44px;top:563px;" width="10" height="10" viewBox="0 0 10 10"><path d="M3 1 L7 5 L3 9" fill="none" stroke="#a3a3a3" stroke-width="1.800"/></svg><svg class="b" style="left:63px;top:560px;" width="16" height="16" viewBox="0 0 16 16"><path d="M.5 1.800 q0 -.8 .8 -.8 h4.700 l1.500 1.500 h7.200 q.8 0 .8 .8 v10.400 q0 .8 -.8 .8 h-13.400 q-.8 0 -.8 -.8 z" fill="#f6eeb2" stroke="#d9cc84" stroke-width="1"/></svg><span class="t" style="left:84px;top:560px;line-height:16px;transform:scaleX(0.8883);">LF4 - Schnee</span><svg class="b" style="left:24px;top:581px;" width="10" height="10" viewBox="0 0 10 10"><path d="M3 1 L7 5 L3 9" fill="none" stroke="#a3a3a3" stroke-width="1.800"/></svg><svg class="b" style="left:43px;top:578px;" width="16" height="16" viewBox="0 0 16 16"><path d="M.5 1.800 q0 -.8 .8 -.8 h4.700 l1.500 1.500 h7.200 q.8 0 .8 .8 v10.400 q0 .8 -.8 .8 h-13.400 q-.8 0 -.8 -.8 z" fill="#f6eeb2" stroke="#d9cc84" stroke-width="1"/></svg><span class="t" style="left:64px;top:578px;line-height:16px;transform:scaleX(0.9326);">Ergebnisse</span><svg class="b" style="left:24px;top:599px;" width="10" height="10" viewBox="0 0 10 10"><path d="M3 1 L7 5 L3 9" fill="none" stroke="#a3a3a3" stroke-width="1.800"/></svg><svg class="b" style="left:43px;top:596px;" width="16" height="16" viewBox="0 0 16 16"><path d="M.5 1.800 q0 -.8 .8 -.8 h4.700 l1.500 1.500 h7.200 q.8 0 .8 .8 v10.400 q0 .8 -.8 .8 h-13.400 q-.8 0 -.8 -.8 z" fill="#f6eeb2" stroke="#d9cc84" stroke-width="1"/></svg><span class="t" style="left:64px;top:596px;line-height:16px;transform:scaleX(0.9995);">Hilfsobjekte</span><svg class="b" style="left:24px;top:617px;" width="10" height="10" viewBox="0 0 10 10"><path d="M3 1 L7 5 L3 9" fill="none" stroke="#a3a3a3" stroke-width="1.800"/></svg><svg class="b" style="left:43px;top:614px;" width="16" height="16" viewBox="0 0 16 16"><path d="M.5 1.800 q0 -.8 .8 -.8 h4.700 l1.500 1.500 h7.200 q.8 0 .8 .8 v10.400 q0 .8 -.8 .8 h-13.400 q-.8 0 -.8 -.8 z" fill="#f6eeb2" stroke="#d9cc84" stroke-width="1"/></svg><span class="t" style="left:64px;top:614px;line-height:16px;transform:scaleX(0.9528);">Betonbemessung</span><svg class="b" style="left:24px;top:635px;" width="10" height="10" viewBox="0 0 10 10"><path d="M1 3 L5 7 L9 3" fill="none" stroke="#404040" stroke-width="1.800"/></svg><svg class="b" style="left:43px;top:632px;" width="16" height="16" viewBox="0 0 16 16"><path d="M1.500 1.800 h5 l1.500 1.500 h6.500 v10.700 h-13 z" fill="#faf5d4" stroke="#d9cc84" stroke-width="1"/><path d="M.8 14.500 l1.200 -9.500 h13.500 l-.8 9.500 z" fill="#f6eeb2" stroke="#d9cc84" stroke-width="1"/></svg><span class="t" style="left:64px;top:632px;line-height:16px;transform:scaleX(0.9994);">Ausdruckprotokolle</span><svg class="b" style="left:63px;top:650px;" width="16" height="16" viewBox="0 0 16 16"><path d="M1.500 .5 h9 l3 3 v12 h-12 z" fill="#fff" stroke="#555" stroke-width="1"/><path d="M4 5.500 h7 M4 8 h7 M4 10.500 h7 M4 13 h7" stroke="#555" stroke-width="1"/></svg><span class="t" style="left:84px;top:650px;line-height:16px;transform:scaleX(.95);">1</span><svg class="b" style="left:4px;top:671px;" width="10" height="10" viewBox="0 0 10 10"><path d="M3 1 L7 5 L3 9" fill="none" stroke="#a3a3a3" stroke-width="1.800"/></svg><svg class="b" style="left:23px;top:668px;" width="16" height="16" viewBox="0 0 16 16"><path d="M3.500 1.500 h7 l3 3 v10 h-10 z" fill="#fff" stroke="#555" stroke-width="1"/><path d="M1 8 l5 -3 l6 3 l-4 5 z" fill="#2e6aa0"/><path d="M3 8 l3 -1.500 l4 2" stroke="#a8c8e8" stroke-width=".8" fill="none"/></svg><span class="t" style="left:44px;top:668px;line-height:16px;transform:scaleX(0.9715);">Gegliederte Querschnitte.rf6*</span><svg class="b" style="left:4px;top:689px;" width="10" height="10" viewBox="0 0 10 10"><path d="M3 1 L7 5 L3 9" fill="none" stroke="#a3a3a3" stroke-width="1.800"/></svg><svg class="b" style="left:23px;top:686px;" width="16" height="16" viewBox="0 0 16 16"><path d="M3.500 1.500 h7 l3 3 v10 h-10 z" fill="#fff" stroke="#555" stroke-width="1"/><path d="M1 8 l5 -3 l6 3 l-4 5 z" fill="#2e6aa0"/><path d="M3 8 l3 -1.500 l4 2" stroke="#a8c8e8" stroke-width=".8" fill="none"/></svg><span class="t" style="left:44px;top:686px;line-height:16px;transform:scaleX(0.9481);">2021-07-15_Schulung-Betonbemessung_Model 2.rf6*</span></div>
<div class="b" style="left:322px;top:128px;width:16px;height:703px;background:#f0f0f0;"></div>
<div class="b" style="left:322px;top:128px;width:16px;height:684px;background:#cdcdcd;"></div>
<svg class="b" style="left:322px;top:813px;" width="16" height="18" viewBox="0 0 16 18"><path d="M4 6 L8 10.500 L12 6" fill="none" stroke="#505050" stroke-width="1.700"/></svg>
<div class="b" style="left:4px;top:831px;width:334px;height:15px;background:#f0f0f0;"></div>
<div class="b" style="left:21px;top:831px;width:144px;height:15px;background:#cdcdcd;"></div>
<svg class="b" style="left:4px;top:831px;" width="17" height="15" viewBox="0 0 17 15"><path d="M10.500 3.500 L6 7.500 L10.500 11.500" fill="none" stroke="#505050" stroke-width="1.700"/></svg>
<svg class="b" style="left:304px;top:831px;" width="17" height="15" viewBox="0 0 17 15"><path d="M6.500 3.500 L11 7.500 L6.500 11.500" fill="none" stroke="#505050" stroke-width="1.700"/></svg>
<div class="b" style="left:322px;top:831px;width:16px;height:15px;background:#fff;"></div>
<div class="b" style="left:4px;top:847px;width:39px;height:24px;background:#fff;"></div>
<div class="b" style="left:43px;top:848px;width:37px;height:22px;background:#f0f0f0;border:1px solid #d0d0dc;box-sizing:border-box;"></div>
<div class="b" style="left:80px;top:848px;width:40px;height:22px;background:#f0f0f0;border:1px solid #d0d0dc;border-left:none;box-sizing:border-box;"></div>
<svg class="b" style="left:13px;top:850px;" width="20" height="18" viewBox="0 0 20 18">
<path d="M1.500 5.500 h5 l1.500 1.500 h7 v8 h-13.500 z" fill="#f2c94c" stroke="#c79a1e" stroke-width="1"/>
<path d="M5 2.500 h12 v8" fill="none" stroke="#3a66b8" stroke-width="1.600"/>
<path d="M9 9 l5 1.500 l2 4 l-4 -1 z" fill="#6fa8e8" stroke="#2a5aa8" stroke-width=".7"/>
<path d="M14 14 l3 3" stroke="#d22" stroke-width="1.500"/>
</svg>
<svg class="b" style="left:52px;top:852px;" width="18" height="14" viewBox="0 0 18 14">
<path d="M1 7 Q9 -1 17 7 Q9 15 1 7 Z" fill="#fff" stroke="#2a3a8c" stroke-width="1.400"/>
<circle cx="9" cy="7" r="3.300" fill="#2a3a8c"/><circle cx="9" cy="7" r="1.200" fill="#6f86d8"/>
</svg>
<svg class="b" style="left:90px;top:853px;" width="18" height="12" viewBox="0 0 18 12"><rect x="1" y="1.500" width="11" height="9" rx="1.500" fill="#5a5a5a"/><path d="M12.500 5 L17 2 V10 L12.500 7 Z" fill="#5a5a5a"/></svg>
<div class="b" style="left:3px;top:871px;width:337px;height:1px;background:#c8c8d8;"></div>
<div class="b" style="left:339px;top:127px;width:1px;height:745px;background:#c8c8d8;"></div>
<div class="b" style="left:0px;top:873px;width:1200px;height:24px;background:#f6f6f6;"></div>
<div class="b" style="left:1px;top:897px;width:1199px;height:3px;background:#2c6474;"></div>
<div class="b" style="left:600px;top:897px;width:600px;height:3px;background:#3a3226;"></div>
<div class="b" style="left:1199px;top:0px;width:1px;height:897px;background:#8c8c8c;"></div>
<div class="b" style="left:322px;top:877px;width:35px;height:19px;border:1px solid #d2d2d2;box-sizing:border-box;background:#ededed;"></div>
<div class="b" style="left:409px;top:877px;width:51px;height:19px;border:1px solid #d2d2d2;box-sizing:border-box;background:#ededed;"></div>
<div class="b" style="left:463px;top:877px;width:46px;height:19px;border:1px solid #d2d2d2;box-sizing:border-box;background:#ededed;"></div>
<span class="t" style="left:326px;top:879px;line-height:16px;transform:scaleX(0.8570);">FANG</span>
<span class="t" style="left:364px;top:879px;line-height:16px;transform:scaleX(0.8010);">RASTER</span>
<span class="t" style="left:414px;top:879px;line-height:16px;transform:scaleX(0.7767);">LRASTER</span>
<span class="t" style="left:467px;top:879px;line-height:16px;transform:scaleX(0.8806);">OFANG</span>
<span class="t" style="left:515px;top:879px;line-height:16px;transform:scaleX(0.9549);">Sichtbarkeitsmodus</span>
<span class="t" style="left:735px;top:879px;line-height:16px;transform:scaleX(0.8567);">KS: Global XYZ</span>
<span class="t" style="left:891px;top:879px;line-height:16px;transform:scaleX(0.8540);">Ebene: XY</span>
<div class="b" style="left:624px;top:878px;width:1px;height:18px;background:#d4d4d4;"></div>
<div class="b" style="left:886px;top:878px;width:1px;height:18px;background:#d4d4d4;"></div>
<div class="b" style="left:952px;top:878px;width:1px;height:18px;background:#d4d4d4;"></div>
<div class="b" style="left:1028px;top:878px;width:1px;height:18px;background:#d4d4d4;"></div>
<div class="b" style="left:1104px;top:878px;width:1px;height:18px;background:#d4d4d4;"></div>
<div class="b" style="left:1180px;top:878px;width:1px;height:18px;background:#d4d4d4;"></div>
<svg class="b" style="left:1186px;top:884px;" width="12" height="12" viewBox="0 0 12 12"><path d="M9 2h2v2h-2zM9 6h2v2h-2zM5 6h2v2h-2zM9 10h2v2h-2zM5 10h2v2h-2zM1 10h2v2h-2z" fill="#b8b8b8"/></svg>
<div class="b" style="left:201px;top:119px;width:752px;height:527px;background:#d1d1d7;border:1px solid #585858;box-sizing:border-box;box-shadow:0 6px 18px 0 rgba(0,0,0,.5);"></div>
<div class="b" style="left:202px;top:120px;width:750px;height:30px;background:#fff;"></div>
<svg class="b" style="left:208px;top:125px;" width="20" height="20" viewBox="-1 -1 22 22">
<path d="M2 10 Q5 3 10 2.700 Q15 3.500 16.500 8.500 L11.500 16.500 Q9.500 11 2 10 Z" fill="#6f8cc4" stroke="#3a4c7c" stroke-width=".8"/>
<path d="M10 2.700 Q15 3.500 16.500 8.500 L11.500 16.500 Q13.500 9 10 2.700 Z" fill="#3f5590"/>
<path d="M4.500 6.500 Q10 7 13.500 13.500 M7 4 Q12 5 15 11 M4 9.500 L8 3.200 M7.500 11 L12 3.500 M10.500 13.500 L14.500 5" stroke="#b4ccf0" stroke-width=".8" fill="none"/>
<text x="5.300" y="17.800" font-size="11.500" font-weight="bold" text-anchor="middle" fill="#f2c420" stroke="#5e4e14" stroke-width=".5" font-family="Liberation Sans, sans-serif">6</text>
</svg>
<span class="t" style="left:231px;top:127px;line-height:16px;transform:scaleX(0.9794);">Verschieben/Kopieren</span>
<svg class="b" style="left:830px;top:124px;" width="115" height="20" viewBox="0 0 115 20">
<path d="M1 10.500 H10" stroke="#b8b8b8" stroke-width="1"/>
<rect x="48.500" y="5.500" width="9" height="9" fill="none" stroke="#111" stroke-width="1.300"/>
<path d="M94 5 L104 15 M104 5 L94 15" stroke="#111" stroke-width="1.300"/>
</svg>
<div class="b" style="left:211px;top:159px;width:63px;height:24px;background:#ececec;"></div>
<div class="b" style="left:274px;top:159px;width:169px;height:22px;background:#dcdcdc;"></div>
<span class="t" style="left:230px;top:164px;line-height:16px;transform:scaleX(0.8520);">Basis</span>
<span class="t" style="left:281px;top:164px;line-height:16px;transform:scaleX(0.9951);">Nummerierung und Optionen</span>
<div class="b" style="left:211px;top:181px;width:732px;height:414px;background:#ececec;"></div>
<div class="b" style="left:220px;top:190px;width:364px;height:71px;background:#fff;"></div>
<div class="b" style="left:220px;top:271px;width:364px;height:316px;background:#fff;"></div>
<div class="b" style="left:594px;top:190px;width:340px;height:397px;background:#fff;"></div>
<div class="b" style="left:202px;top:603px;width:750px;height:42px;background:#fff;"></div>
<span class="t" style="left:225px;top:191px;line-height:16px;color:#5f74a4;transform:scaleX(0.9782);text-shadow:.4px 0 0 #5f74a4;">Kopieren</span>
<div class="b" style="left:225px;top:220px;width:13px;height:13px;background:#fff;border:1px solid #333;box-sizing:border-box;"></div>
<svg class="b" style="left:225px;top:220px;" width="13" height="13" viewBox="0 0 13 13"><path d="M2.800 6.500 L5.300 9.200 L10.300 3.500" fill="none" stroke="#222" stroke-width="1.200"/></svg>
<span class="t" style="left:243px;top:219px;line-height:16px;transform:scaleX(0.9573);">Kopie erstellen</span>
<span class="t" style="left:410px;top:217px;line-height:16px;transform:scaleX(0.9539);">Anzahl Schritte</span>
<span class="t" style="left:410px;top:238px;line-height:16px;transform:scaleX(1.0467);">n</span>
<div class="b" style="left:422px;top:237px;width:65px;height:19px;background:#e6e6f2;"></div>
<span class="t" style="left:460px;top:238px;line-height:16px;transform:scaleX(0.8972);">1</span>
<svg class="b" style="left:474px;top:238px;" width="8" height="16" viewBox="0 0 8 16"><path d="M1.200 5.500 L4 2.500 L6.800 5.500 Z M1.200 10.500 L4 13.500 L6.800 10.500 Z" fill="#444"/></svg>
<span class="t" style="left:225px;top:272px;line-height:16px;color:#5f74a4;transform:scaleX(0.9801);text-shadow:.4px 0 0 #5f74a4;">Verschiebungsrichtung</span>
<span class="t" style="left:225px;top:298px;line-height:16px;transform:scaleX(0.9539);">Koordinatensystem</span>
<div class="b" style="left:225px;top:317px;width:175px;height:21px;background:#e6e6f2;"></div>
<div class="b" style="left:230px;top:322px;width:11px;height:11px;background:#ccffff;"></div>
<span class="t" style="left:246px;top:320px;line-height:16px;transform:scaleX(0.8894);">1 - Global XYZ</span>
<svg class="b" style="left:385px;top:323px;" width="12" height="8" viewBox="0 0 12 8"><path d="M1.500 1.500 L6 6 L10.500 1.500" fill="none" stroke="#444" stroke-width="1.200"/></svg>
<div class="b" style="left:405px;top:317px;width:25px;height:21px;background:#cce4f7;"></div>
<div class="b" style="left:433px;top:317px;width:25px;height:21px;background:#cce4f7;"></div>
<svg class="b" style="left:405px;top:317px;" width="25" height="21" viewBox="0 0 25 21"><rect x="9.5" y="7.5" width="10.500" height="10.500" fill="#f0f0f0" stroke="#444" stroke-width="1.200"/><rect x="9.5" y="7.5" width="10.500" height="2.800" fill="#444"/><rect x="13" y="8" width="6.5" height="1.500" fill="#3048f0"/><polygon points="8.5,1.4 9.5,4.3 12.5,3.7 10.4,6.0 12.5,8.3 9.5,7.7 8.5,10.6 7.5,7.7 4.5,8.3 6.6,6.0 4.5,3.7 7.5,4.3" fill="#f7ec1c" stroke="#b8a000" stroke-width=".6"/></svg>
<svg class="b" style="left:433px;top:317px;" width="25" height="21" viewBox="0 0 25 21"><rect x="4.5" y="7.5" width="10.500" height="10.500" fill="#f0f0f0" stroke="#444" stroke-width="1.200"/><rect x="4.5" y="7.5" width="10.500" height="2.800" fill="#444"/><rect x="8.5" y="8" width="2" height="1.500" fill="#3048f0"/><rect x="5.300" y="8" width="2.200" height="1.500" fill="#fff"/>
<path d="M5.500 6.500 q2 -3.500 6 -3.500 l5 -.5 v5 q-2 3 -5 3 q-1.500 -2.500 -6 -4 z" fill="#ecd0b4" stroke="#b89878" stroke-width=".6"/><path d="M15.500 2 h3 q1.500 3 1.500 6.500 h-3.500 z" fill="#5a86d0"/><path d="M15.500 2 h3" stroke="#3a66b0" stroke-width="1"/>
</svg>
<span class="t" style="left:225px;top:364px;line-height:16px;transform:scaleX(0.9911);">Richtung durch</span>
<div class="b" style="left:225px;top:383px;width:175px;height:21px;background:#e6e6f2;"></div>
<span class="t" style="left:230px;top:386px;line-height:16px;transform:scaleX(0.9604);">Verschiebungsvektor</span>
<svg class="b" style="left:385px;top:389px;" width="12" height="8" viewBox="0 0 12 8"><path d="M1.500 1.500 L6 6 L10.500 1.500" fill="none" stroke="#444" stroke-width="1.200"/></svg>
<span class="t" style="left:225px;top:430px;line-height:16px;transform:scaleX(0.9604);">Verschiebungsvektor</span>
<span class="t" style="left:225px;top:451px;line-height:16px;transform:scaleX(0.8733);">X</span>
<div class="b" style="left:245px;top:449px;width:90px;height:20px;background:#e6e6f2;"></div>
<span class="t" style="left:277px;top:452px;line-height:16px;transform:scaleX(0.8991);">5.000</span>
<svg class="b" style="left:312px;top:451px;" width="8" height="16" viewBox="0 0 8 16"><path d="M1.200 5.500 L4 2.500 L6.800 5.500 Z M1.200 10.500 L4 13.500 L6.800 10.500 Z" fill="#444"/></svg>
<svg class="b" style="left:326px;top:454px;" width="6" height="10" viewBox="0 0 6 10"><path d="M.5 .5 L5.500 5 L.5 9.500 Z" fill="#222"/></svg>
<span class="t" style="left:340px;top:451px;line-height:16px;transform:scaleX(0.8997);">[m]</span>
<span class="t" style="left:225px;top:477px;line-height:16px;transform:scaleX(0.8733);">Y</span>
<div class="b" style="left:245px;top:475px;width:90px;height:20px;background:#e6e6f2;"></div>
<span class="t" style="left:277px;top:478px;line-height:16px;transform:scaleX(0.8991);">0.000</span>
<svg class="b" style="left:312px;top:477px;" width="8" height="16" viewBox="0 0 8 16"><path d="M1.200 5.500 L4 2.500 L6.800 5.500 Z M1.200 10.500 L4 13.500 L6.800 10.500 Z" fill="#444"/></svg>
<svg class="b" style="left:326px;top:480px;" width="6" height="10" viewBox="0 0 6 10"><path d="M.5 .5 L5.500 5 L.5 9.500 Z" fill="#222"/></svg>
<span class="t" style="left:340px;top:477px;line-height:16px;transform:scaleX(0.8997);">[m]</span>
<span class="t" style="left:225px;top:503px;line-height:16px;transform:scaleX(0.9532);">Z</span>
<div class="b" style="left:245px;top:501px;width:90px;height:20px;background:#e6e6f2;"></div>
<span class="t" style="left:277px;top:504px;line-height:16px;transform:scaleX(0.8991);">0.000</span>
<svg class="b" style="left:312px;top:503px;" width="8" height="16" viewBox="0 0 8 16"><path d="M1.200 5.500 L4 2.500 L6.800 5.500 Z M1.200 10.500 L4 13.500 L6.800 10.500 Z" fill="#444"/></svg>
<svg class="b" style="left:326px;top:506px;" width="6" height="10" viewBox="0 0 6 10"><path d="M.5 .5 L5.500 5 L.5 9.500 Z" fill="#222"/></svg>
<span class="t" style="left:340px;top:503px;line-height:16px;transform:scaleX(0.8997);">[m]</span>
<div class="b" style="left:405px;top:449px;width:25px;height:21px;background:#cce4f7;"></div>
<svg class="b" style="left:405px;top:449px;" width="25" height="21" viewBox="0 0 25 21">
<path d="M8 2 l6 6 m0 -6 l-6 6" stroke="#f01818" stroke-width="1.500"/>
<path d="M11.200 5.500 v10 l2.300 -2.100 l2 4.300 l1.600 -.8 l-2 -4.100 h3.300 z" fill="#fff" stroke="#8a8a8a" stroke-width=".7"/>
<text x="3.800" y="17.500" font-size="8" font-weight="bold" fill="#222" font-family="Liberation Sans, sans-serif" letter-spacing="-.4">2x</text>
</svg>
<span class="t" style="left:225px;top:537px;line-height:16px;transform:scaleX(0.9762);">Abstand</span>
<div class="b" style="left:225px;top:556px;width:90px;height:20px;background:#e6e6f2;"></div>
<span class="t" style="left:241px;top:559px;line-height:16px;transform:scaleX(0.8991);">5.000</span>
<svg class="b" style="left:274px;top:562px;" width="12" height="8" viewBox="0 0 12 8"><path d="M1.500 1.500 L6 6 L10.500 1.500" fill="none" stroke="#555" stroke-width="1.200"/></svg>
<svg class="b" style="left:293px;top:558px;" width="8" height="16" viewBox="0 0 8 16"><path d="M1.200 5.500 L4 2.500 L6.800 5.500 Z M1.200 10.500 L4 13.500 L6.800 10.500 Z" fill="#444"/></svg>
<svg class="b" style="left:306px;top:561px;" width="6" height="10" viewBox="0 0 6 10"><path d="M.5 .5 L5.500 5 L.5 9.500 Z" fill="#222"/></svg>
<span class="t" style="left:320px;top:558px;line-height:16px;transform:scaleX(0.8997);">[m]</span>
<div class="b" style="left:385px;top:560px;width:13px;height:13px;background:#fff;border:1px solid #bcbcbc;box-sizing:border-box;"></div>
<span class="t" style="left:403px;top:559px;line-height:16px;color:#7a7a7a;transform:scaleX(0.9044);">Gesamt</span>
<span class="t" style="left:599px;top:193px;line-height:16px;transform:scaleX(0.9295);">Koordinatensystem '1 - Global XYZ'</span>
<span class="t" style="left:599px;top:206px;line-height:16px;transform:scaleX(0.9798);">Richtung durch 'Verschiebungsvektor'</span>
<svg class="b" style="left:0;top:0" width="1200" height="900" viewBox="0 0 1200 900" font-family='Liberation Sans, sans-serif'><path d="M643.500 237 L662 239.800" stroke="#d8401c" stroke-width="1.200"/><path d="M666 240.400 L660 237.300 L659.400 241.600 Z" fill="#d8401c"/><path d="M643.500 237 L629 243.600" stroke="#20a040" stroke-width="1.200"/><path d="M625 245.400 L631.500 244.800 L629.700 240.800 Z" fill="#20a040"/><path d="M643.500 237 V254" stroke="#2050d0" stroke-width="1.200"/><path d="M643.500 259 L641.300 253 H645.700 Z" fill="#2050d0"/><circle cx="643.500" cy="237" r="2.200" fill="#f0d000"/><text x="667.500" y="245" fill="#d8401c" font-size="11">X</text><text x="616.500" y="250" fill="#20a040" font-size="11">Y</text><text x="640.500" y="269" fill="#2050d0" font-size="11">Z</text><g stroke="#6c6c7c" stroke-width=".8" fill="none"><path d="M714.500 243.500 L690 287"/><path d="M714.500 243.500 L893 340.500"/><path d="M706 258.500 L796 307"/><path d="M797.500 304 L790 318"/><path d="M895 338 L880 365"/></g><circle cx="714.500" cy="243.500" r="2" fill="#5c5c6c"/><circle cx="706" cy="258.500" r="2" fill="#5c5c6c"/><path d="M796.500 307.300 L790.500 307 L792.800 302.500 Z" fill="#5c5c6c"/><path d="M893.500 340.800 L887.500 340.500 L889.800 336 Z" fill="#5c5c6c"/><text transform="translate(752.700 277.700) rotate(29)" y="2.500" text-anchor="middle" fill="#555" font-size="12" font-style="italic">Δ</text><text transform="translate(810 290) rotate(29)" y="2.500" text-anchor="middle" fill="#555" font-size="12" font-style="italic">n·Δ</text><polygon points="681.7,303.3 638.3,328.3 668.3,403.3 712.3,378.3" fill="#dcdce2" stroke="#b09a18" stroke-width="1.8" stroke-linejoin="miter"/><polygon points="770.5,353.0 727.1,378.0 757.1,453.0 801.1,428.0" fill="#dcdce2" stroke="#54546c" stroke-width="1.3" stroke-linejoin="miter"/><polygon points="859.3,402.7 815.9,427.7 845.9,502.7 889.9,477.7" fill="#dcdce2" stroke="#54546c" stroke-width="1.3" stroke-linejoin="miter"/><path d="M681.7 303.3L859.3 402.7M638.3 328.3L815.9 427.7M668.3 403.3L845.9 502.7M712.3 378.3L889.9 477.7" stroke="#555" stroke-width="1.100" stroke-dasharray="1.200 3.300" fill="none"/><path d="M681.7 303.3 L780.7 319.90000000000003" stroke="#d8401c" stroke-width="1.500" stroke-dasharray="7 4.500" fill="none"/><path d="M787.7 321.1 L780.1 323.5 L781.3000000000001 316.5 Z" fill="#d8401c"/><circle cx="681.7" cy="303.3" r="1.600" fill="#d8401c"/><circle cx="790.7" cy="322.3" r="1.700" fill="#18a040"/><path d="M788.7 323.3 L778.7 327.8" stroke="#18a040" stroke-width="1.500"/><path d="M772.7 330.3 L779.2 324.3 L781.7 329.8 Z" fill="#18a040"/><circle cx="770.3000000000001" cy="331.6" r="1.600" fill="#1848c8"/><path d="M770.3000000000001 331.6 V337.6" stroke="#1848c8" stroke-width="1.500"/><path d="M770.3000000000001 351.6 L767.1 345.1 H773.5000000000001 Z" fill="#1848c8"/><text x="732" y="307.0" fill="#d8401c" font-size="11">d<tspan dy="2.500" font-size="8.500">x</tspan></text><text x="781.2" y="334.3" fill="#18a040" font-size="11">d<tspan dy="2.500" font-size="8.500">y</tspan></text><text x="772.8000000000001" y="343.1" fill="#1848c8" font-size="11">d<tspan dy="2.500" font-size="8.500">z</tspan></text><path d="M770.5 353 L869.5 369.6" stroke="#d8401c" stroke-width="1.500" stroke-dasharray="7 4.500" fill="none"/><path d="M876.5 370.8 L868.9 373.2 L870.1 366.2 Z" fill="#d8401c"/><circle cx="770.5" cy="353" r="1.600" fill="#d8401c"/><circle cx="879.5" cy="372" r="1.700" fill="#18a040"/><path d="M877.5 373 L867.5 377.5" stroke="#18a040" stroke-width="1.500"/><path d="M861.5 380 L868.0 374 L870.5 379.5 Z" fill="#18a040"/><circle cx="859.1" cy="381.3" r="1.600" fill="#1848c8"/><path d="M859.1 381.3 V387.3" stroke="#1848c8" stroke-width="1.500"/><path d="M859.1 401.3 L855.9 394.8 H862.3000000000001 Z" fill="#1848c8"/><text x="818" y="356.7" fill="#d8401c" font-size="11">d<tspan dy="2.500" font-size="8.500">x</tspan></text><text x="870.0" y="384" fill="#18a040" font-size="11">d<tspan dy="2.500" font-size="8.500">y</tspan></text><text x="861.6" y="392.8" fill="#1848c8" font-size="11">d<tspan dy="2.500" font-size="8.500">z</tspan></text></svg>
<div class="b" style="left:599px;top:561px;width:25px;height:21px;background:#e6e6e6;"></div>
<svg class="b" style="left:599px;top:561px;" width="25" height="21" viewBox="0 0 25 21">
<rect x="4" y="2" width="16" height="16" fill="#fdfdfd"/>
<rect x="4" y="2" width="8" height="8" fill="#a4a4a4"/><path d="M5 3.500 l3 2.500 l3 -2" stroke="#e8e8e8" stroke-width="1.200" fill="none"/><rect x="4.500" y="7" width="7" height="2.500" fill="#b4b4b4"/>
<path d="M12 4.500 h8 M12 7 h8 M14.500 2 v8 M17.500 2 v8 M6.500 10 v8 M9.500 10 v8 M4 12.500 h8 M4 15.500 h8" stroke="#e6e6e6" stroke-width=".8"/>
<path d="M12 10.500 h5.500 v2 l2.500 1 v4 l-3 .5 l-5 -2 z" fill="#9c9c9c"/><path d="M13.500 12 l2.500 3.500 l3 -1.500" stroke="#d8d8d8" stroke-width="1.300" fill="none"/><path d="M18 14 l2 -.5 v4 l-2 .5 z" fill="#6c6c6c"/>
<path d="M4 18 h9 l-9 -2 z" fill="#e0e0e0"/>
</svg>
<div class="b" style="left:211px;top:613px;width:25px;height:21px;background:#cce4f7;"></div>
<div class="b" style="left:246px;top:613px;width:25px;height:21px;background:#cce4f7;"></div>
<div class="b" style="left:274px;top:613px;width:25px;height:21px;background:#cce4f7;"></div>
<div class="b" style="left:309px;top:613px;width:25px;height:21px;background:#cce4f7;"></div>
<svg class="b" style="left:211px;top:613px;" width="25" height="21" viewBox="0 0 25 21">
<rect x="4" y="2.500" width="16" height="4.200" fill="#8edc78"/><path d="M6 2.500v2M8 2.500v2M10 2.500v2M12 2.500v3M14 2.500v2M16 2.500v2M18 2.500v2" stroke="#5cb84c" stroke-width=".7"/>
<text x="3.800" y="16" font-size="10.500" font-weight="bold" fill="#111" font-family="Liberation Sans, sans-serif" letter-spacing="-.5">0,<tspan fill="#1a2a8a" font-weight="normal">00</tspan></text>
<path d="M10.500 17.500 h9.500" stroke="#1a2a8a" stroke-width="1"/>
</svg>
<svg class="b" style="left:246px;top:613px;" width="25" height="21" viewBox="0 0 25 21"><path d="M4 9.5 l3 -4 h7 l-2.500 4 z" fill="#4cb860" stroke="#1f6a2c" stroke-width=".7"/><path d="M4 9.5 h7.500 v6 h-7.500 z" fill="#2a8a3c" stroke="#1f6a2c" stroke-width=".7"/><path d="M11.5 9.5 l2.500 -4 v6 l-2.500 4 z" fill="#1f7430" stroke="#1f6a2c" stroke-width=".7"/><circle cx="6.5" cy="12.5" r="1.300" fill="#c8f0c8"/><circle cx="9" cy="7.5" r="1.100" fill="#c8f0c8"/><path d="M16.500 7 l3.500 3 l-3.500 3 z" fill="#666"/></svg>
<svg class="b" style="left:274px;top:613px;" width="25" height="21" viewBox="0 0 25 21">
<path d="M4 6.500 h11.500 l2.500 2.500 v9.500 h-14 z" fill="#606060"/><rect x="6.500" y="7.500" width="8" height="4.500" fill="#e4e4e4"/><path d="M7.500 9 h6 M7.500 10.500 h6" stroke="#888" stroke-width=".7"/><rect x="7.500" y="14" width="7" height="4.500" fill="#d8d8d8"/><rect x="8.500" y="14.800" width="2" height="3.700" fill="#606060"/>
<path d="M11.5 6 l3 -4 h7 l-2.500 4 z" fill="#4cb860" stroke="#1f6a2c" stroke-width=".7"/><path d="M11.5 6 h7.500 v6 h-7.500 z" fill="#2a8a3c" stroke="#1f6a2c" stroke-width=".7"/><path d="M19.0 6 l2.500 -4 v6 l-2.500 4 z" fill="#1f7430" stroke="#1f6a2c" stroke-width=".7"/><circle cx="14.0" cy="9" r="1.300" fill="#c8f0c8"/><circle cx="16.5" cy="4" r="1.100" fill="#c8f0c8"/></svg>
<svg class="b" style="left:309px;top:613px;" width="25" height="21" viewBox="0 0 25 21">
<ellipse cx="7.700" cy="3.800" rx="3.500" ry="1.300" fill="#999" stroke="#555" stroke-width=".9"/><ellipse cx="7.700" cy="6" rx="3.500" ry="1.300" fill="none" stroke="#666" stroke-width=".9"/><ellipse cx="7.700" cy="8.200" rx="3.500" ry="1.300" fill="none" stroke="#666" stroke-width=".9"/><ellipse cx="7.700" cy="10.400" rx="3.500" ry="1.300" fill="none" stroke="#666" stroke-width=".9"/>
<path d="M5 12 q0 4.500 4.500 4.500" fill="none" stroke="#555" stroke-width="1.300"/><path d="M8.500 14 l3 2.500 l-3 2.500 z" fill="#555"/>
<path d="M12.500 7.500 h5 l2.500 2.500 v8 h-7.500 z" fill="#fff" stroke="#333" stroke-width="1.100"/><path d="M14 11.500 h4.500 M14 13.500 h4.500 M14 15.500 h4.500" stroke="#333" stroke-width="1"/>
</svg>
<div class="b" style="left:679px;top:614px;width:81px;height:21px;background:#e1e1e1;border:1px solid #adadad;box-sizing:border-box;"></div>
<span class="t" style="left:711.5px;top:617px;line-height:16px;transform:scaleX(0.9225);">OK</span>
<div class="b" style="left:770px;top:614px;width:81px;height:21px;background:#e1e1e1;border:1px solid #adadad;box-sizing:border-box;"></div>
<span class="t" style="left:782.0px;top:617px;line-height:16px;transform:scaleX(0.9820);">Abbrechen</span>
<div class="b" style="left:861px;top:614px;width:81px;height:21px;background:#e1e1e1;border:1px solid #adadad;box-sizing:border-box;"></div>
<span class="t" style="left:873.0px;top:617px;line-height:16px;transform:scaleX(1.0050);">Anwenden</span>
<svg class="b" style="left:940px;top:633px;" width="12" height="12" viewBox="0 0 12 12"><path d="M8 1h2v2h-2zM8 5h2v2h-2zM4 5h2v2h-2zM8 9h2v2h-2zM4 9h2v2h-2zM0 9h2v2h-2z" fill="#b0b0b0"/></svg>
</body></html>
